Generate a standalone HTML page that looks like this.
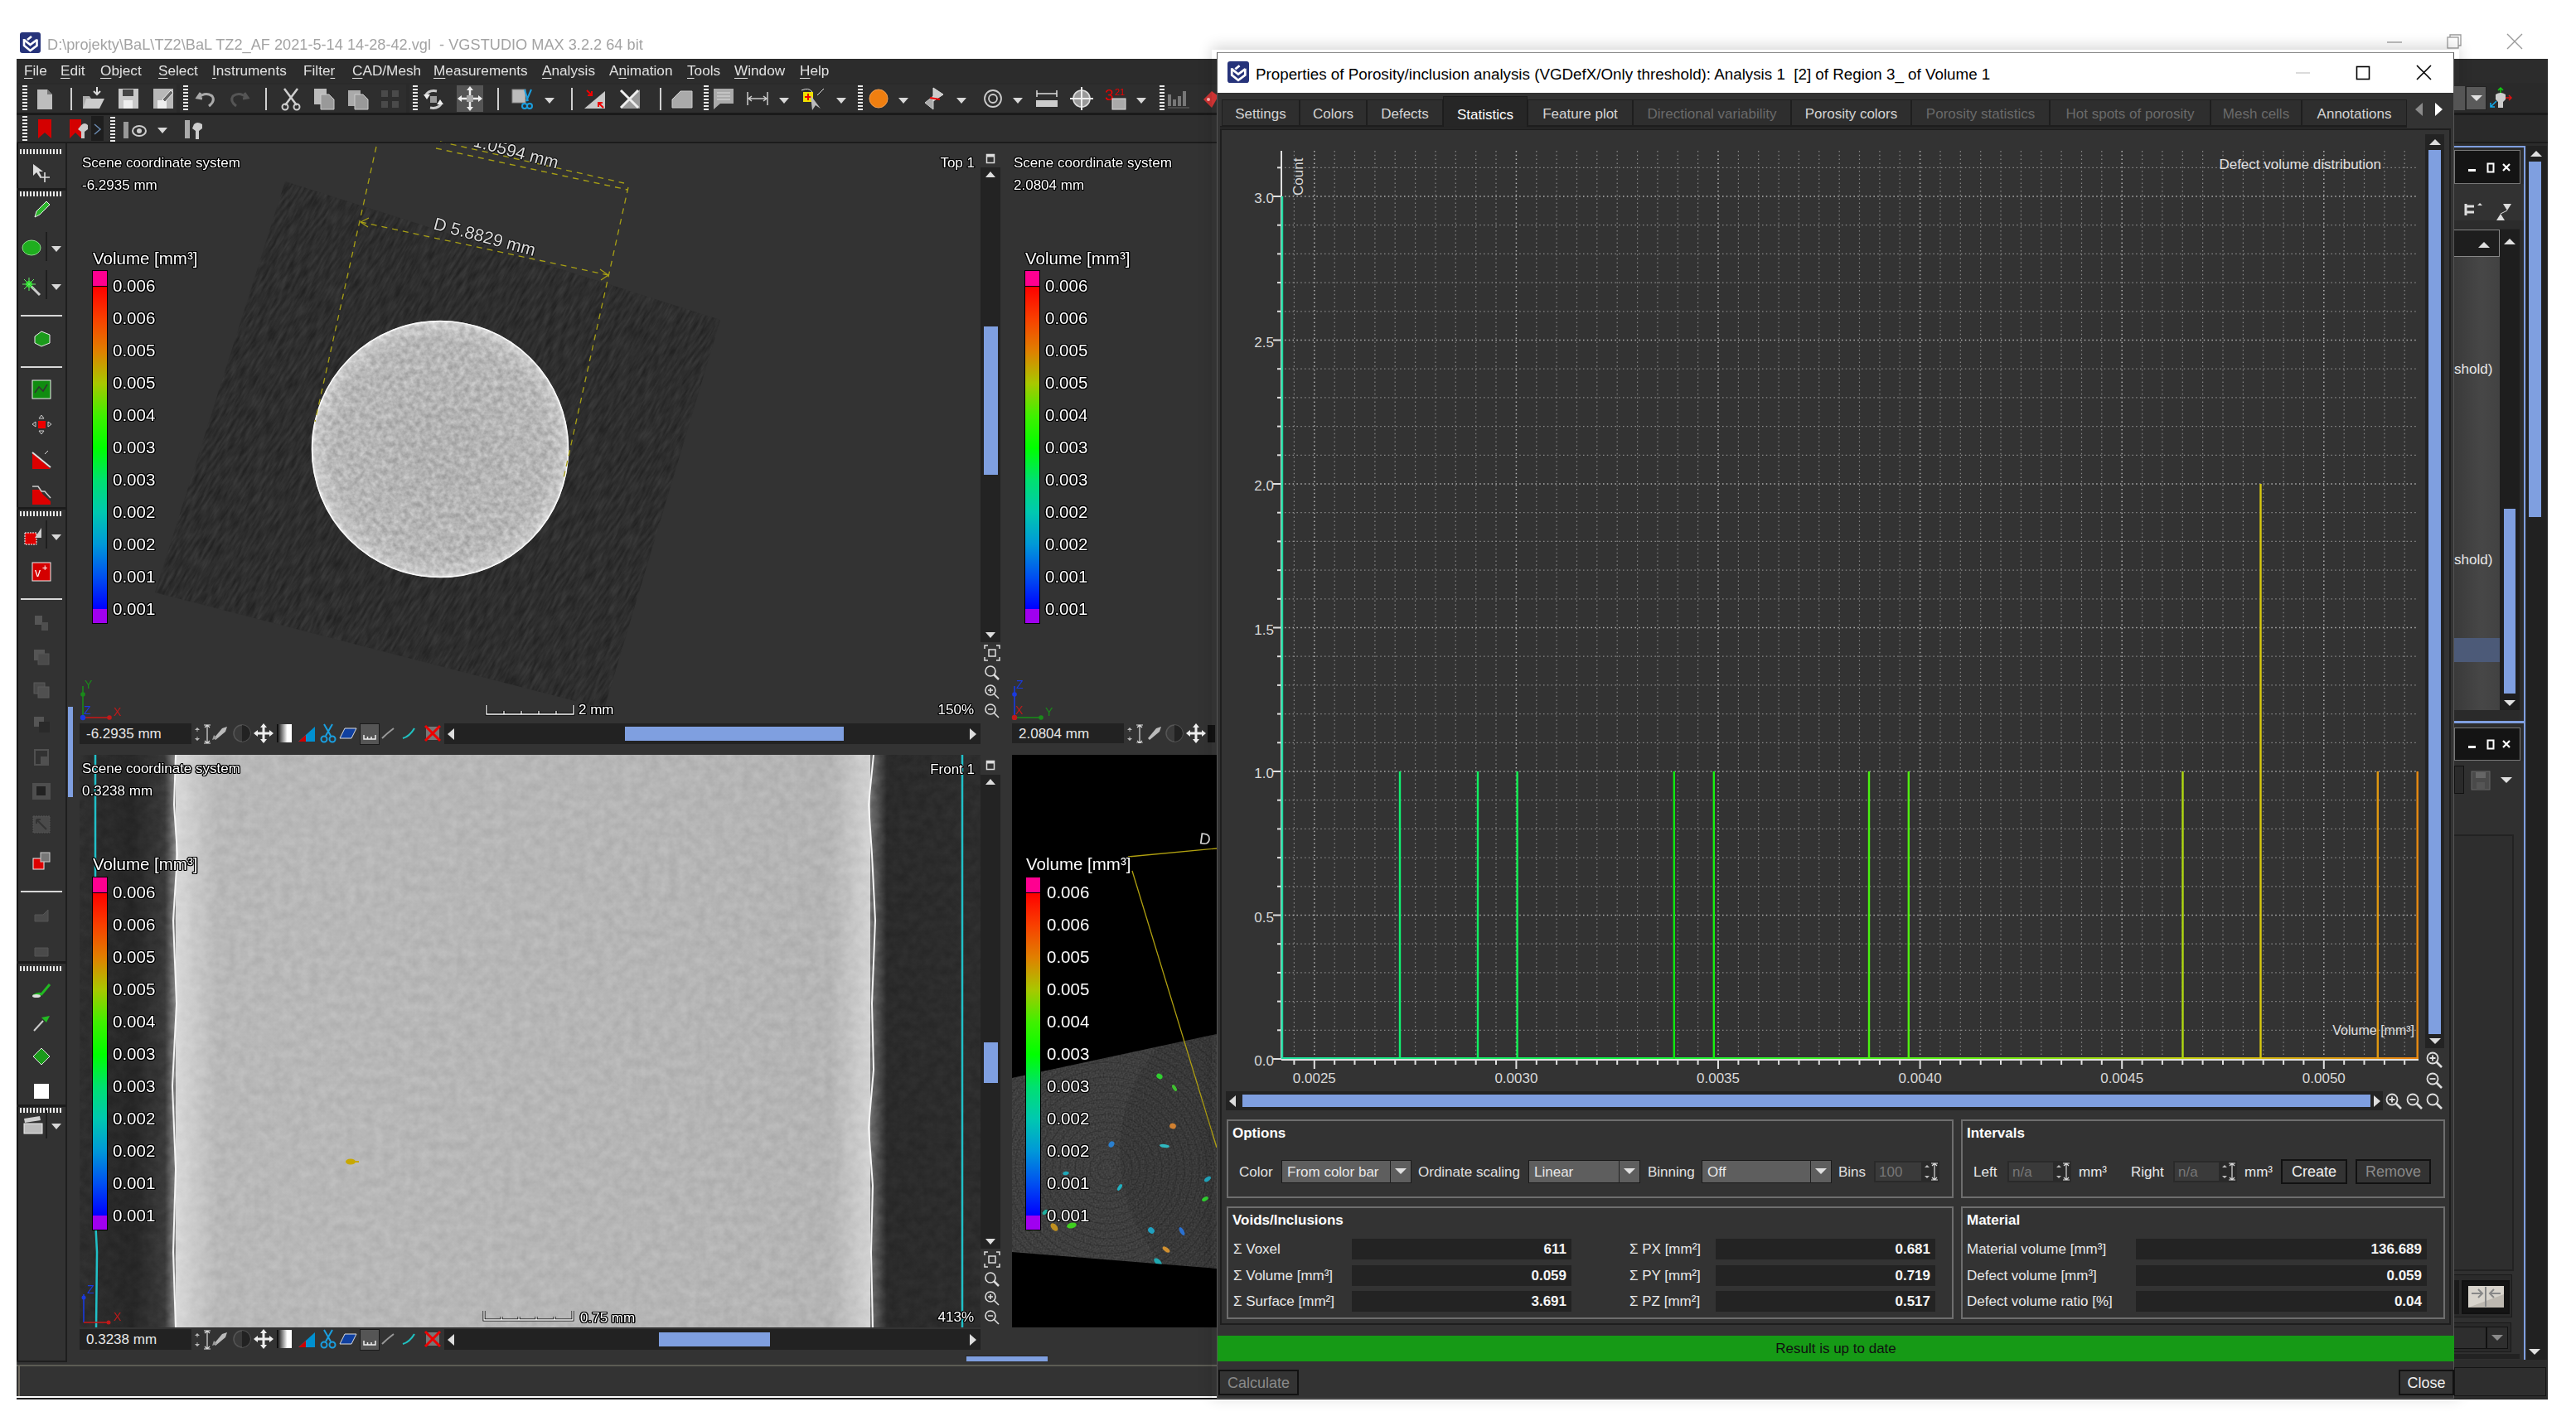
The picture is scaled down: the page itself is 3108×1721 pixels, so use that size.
<!DOCTYPE html><html><head><meta charset="utf-8"><style>html,body{margin:0;padding:0;}body{width:3108px;height:1721px;position:relative;overflow:hidden;background:#ffffff;font-family:"Liberation Sans", sans-serif;}svg{overflow:visible;}</style></head><body><svg style="position:absolute;left:24px;top:39px;" width="25" height="25" viewBox="0 0 25 25"><rect x="0" y="0" width="25" height="25" rx="3.0" fill="#26337a"/><g stroke="#fff" stroke-width="2.6" fill="none" stroke-linejoin="miter"><path d="M5.0 8.0 V16.0 L12.5 22.0 L20.5 16.0 V8.5"/><path d="M5.0 9.0 L12.5 15.0 L20.5 9.0"/><path d="M9.0 9.0 L14.0 5.0"/></g></svg>
<div style="position:absolute;left:57px;top:44.2px;line-height:21px;font-size:18.2px;color:#a3a3a3;white-space:nowrap;">D:\projekty\BaL\TZ2\BaL TZ2_AF 2021-5-14 14-28-42.vgl&nbsp; - VGSTUDIO MAX 3.2.2 64 bit</div>
<svg style="position:absolute;left:2878px;top:40px;" width="110" height="24" viewBox="0 0 110 24"><line x1="2" y1="11" x2="20" y2="11" stroke="#9a9a9a" stroke-width="1.3"/><rect x="75" y="5" width="13" height="13" fill="none" stroke="#9a9a9a" stroke-width="1.3"/><path d="M78 5 V2 H91 V15 H88" fill="none" stroke="#9a9a9a" stroke-width="1.3"/></svg>
<svg style="position:absolute;left:3022px;top:38px;" width="24" height="24" viewBox="0 0 24 24"><path d="M3 3 L21 21 M21 3 L3 21" stroke="#9a9a9a" stroke-width="1.4"/></svg>
<div style="position:absolute;left:20px;top:71px;width:3054px;height:1617px;background:#333333;"></div>
<div style="position:absolute;left:20px;top:71px;width:3054px;height:29px;background:#2c2c2c;"></div>
<div style="position:absolute;left:29px;top:75.0px;line-height:20px;font-size:17.2px;color:#e2e2e2;white-space:nowrap;text-decoration-thickness:1px;text-underline-offset:3px;"><u>F</u>ile</div>
<div style="position:absolute;left:73px;top:75.0px;line-height:20px;font-size:17.2px;color:#e2e2e2;white-space:nowrap;text-decoration-thickness:1px;text-underline-offset:3px;"><u>E</u>dit</div>
<div style="position:absolute;left:121px;top:75.0px;line-height:20px;font-size:17.2px;color:#e2e2e2;white-space:nowrap;text-decoration-thickness:1px;text-underline-offset:3px;"><u>O</u>bject</div>
<div style="position:absolute;left:191px;top:75.0px;line-height:20px;font-size:17.2px;color:#e2e2e2;white-space:nowrap;text-decoration-thickness:1px;text-underline-offset:3px;"><u>S</u>elect</div>
<div style="position:absolute;left:256px;top:75.0px;line-height:20px;font-size:17.2px;color:#e2e2e2;white-space:nowrap;text-decoration-thickness:1px;text-underline-offset:3px;"><u>I</u>nstruments</div>
<div style="position:absolute;left:366px;top:75.0px;line-height:20px;font-size:17.2px;color:#e2e2e2;white-space:nowrap;text-decoration-thickness:1px;text-underline-offset:3px;">Filte<u>r</u></div>
<div style="position:absolute;left:425px;top:75.0px;line-height:20px;font-size:17.2px;color:#e2e2e2;white-space:nowrap;text-decoration-thickness:1px;text-underline-offset:3px;"><u>C</u>AD/Mesh</div>
<div style="position:absolute;left:523px;top:75.0px;line-height:20px;font-size:17.2px;color:#e2e2e2;white-space:nowrap;text-decoration-thickness:1px;text-underline-offset:3px;"><u>M</u>easurements</div>
<div style="position:absolute;left:654px;top:75.0px;line-height:20px;font-size:17.2px;color:#e2e2e2;white-space:nowrap;text-decoration-thickness:1px;text-underline-offset:3px;"><u>A</u>nalysis</div>
<div style="position:absolute;left:735px;top:75.0px;line-height:20px;font-size:17.2px;color:#e2e2e2;white-space:nowrap;text-decoration-thickness:1px;text-underline-offset:3px;">A<u>n</u>imation</div>
<div style="position:absolute;left:829px;top:75.0px;line-height:20px;font-size:17.2px;color:#e2e2e2;white-space:nowrap;text-decoration-thickness:1px;text-underline-offset:3px;"><u>T</u>ools</div>
<div style="position:absolute;left:886px;top:75.0px;line-height:20px;font-size:17.2px;color:#e2e2e2;white-space:nowrap;text-decoration-thickness:1px;text-underline-offset:3px;"><u>W</u>indow</div>
<div style="position:absolute;left:965px;top:75.0px;line-height:20px;font-size:17.2px;color:#e2e2e2;white-space:nowrap;text-decoration-thickness:1px;text-underline-offset:3px;"><u>H</u>elp</div>
<div style="position:absolute;left:20px;top:100px;width:3054px;height:73px;background:#2a2a2a;"></div>
<div style="position:absolute;left:20px;top:137px;width:3054px;height:34px;background:#2f2f2f;"></div>
<div style="position:absolute;left:20px;top:136px;width:3054px;height:3px;background:#1a1a1a;"></div>
<div style="position:absolute;left:20px;top:171px;width:3054px;height:2px;background:#1c1c1c;"></div>
<div style="position:absolute;left:22px;top:102px;width:191px;height:34px;background:#2e2e2e;"></div>
<div style="position:absolute;left:217px;top:102px;width:273px;height:34px;background:#2e2e2e;"></div>
<div style="position:absolute;left:494px;top:102px;width:2580px;height:34px;background:#2e2e2e;"></div>
<svg style="position:absolute;left:27px;top:103px;" width="6" height="32" viewBox="0 0 6 32"><rect x="0" y="0" width="6" height="2" fill="#e8e8e8"/><rect x="0" y="4" width="6" height="2" fill="#e8e8e8"/><rect x="0" y="8" width="6" height="2" fill="#e8e8e8"/><rect x="0" y="12" width="6" height="2" fill="#e8e8e8"/><rect x="0" y="16" width="6" height="2" fill="#e8e8e8"/><rect x="0" y="20" width="6" height="2" fill="#e8e8e8"/><rect x="0" y="24" width="6" height="2" fill="#e8e8e8"/><rect x="0" y="28" width="6" height="2" fill="#e8e8e8"/></svg>
<svg style="position:absolute;left:221px;top:103px;" width="6" height="32" viewBox="0 0 6 32"><rect x="0" y="0" width="6" height="2" fill="#e8e8e8"/><rect x="0" y="4" width="6" height="2" fill="#e8e8e8"/><rect x="0" y="8" width="6" height="2" fill="#e8e8e8"/><rect x="0" y="12" width="6" height="2" fill="#e8e8e8"/><rect x="0" y="16" width="6" height="2" fill="#e8e8e8"/><rect x="0" y="20" width="6" height="2" fill="#e8e8e8"/><rect x="0" y="24" width="6" height="2" fill="#e8e8e8"/><rect x="0" y="28" width="6" height="2" fill="#e8e8e8"/></svg>
<svg style="position:absolute;left:498px;top:103px;" width="6" height="32" viewBox="0 0 6 32"><rect x="0" y="0" width="6" height="2" fill="#e8e8e8"/><rect x="0" y="4" width="6" height="2" fill="#e8e8e8"/><rect x="0" y="8" width="6" height="2" fill="#e8e8e8"/><rect x="0" y="12" width="6" height="2" fill="#e8e8e8"/><rect x="0" y="16" width="6" height="2" fill="#e8e8e8"/><rect x="0" y="20" width="6" height="2" fill="#e8e8e8"/><rect x="0" y="24" width="6" height="2" fill="#e8e8e8"/><rect x="0" y="28" width="6" height="2" fill="#e8e8e8"/></svg>
<svg style="position:absolute;left:43px;top:107px;" width="22" height="26" viewBox="0 0 22 26"><path d="M2 1 H14 L20 7 V25 H2 Z" fill="#bdbdbd"/><path d="M14 1 V7 H20" fill="#777"/></svg>
<div style="position:absolute;left:85px;top:106px;width:2px;height:27px;background:#d0d0d0;"></div>
<svg style="position:absolute;left:98px;top:104px;" width="30" height="30" viewBox="0 0 30 30"><path d="M2 12 H10 L12 15 H24 L20 27 H2 Z" fill="#aaa"/><path d="M6 15 H28 L22 27 H2 Z" fill="#ccc"/><path d="M19 1 V9 M15 6 L19 10 L23 6" stroke="#ddd" stroke-width="2" fill="none"/></svg>
<svg style="position:absolute;left:142px;top:106px;" width="26" height="26" viewBox="0 0 26 26"><rect x="1" y="1" width="24" height="24" fill="#c8c8c8"/><rect x="6" y="2" width="13" height="8" fill="#444"/><rect x="7" y="15" width="11" height="10" fill="#eee"/></svg>
<svg style="position:absolute;left:184px;top:106px;" width="26" height="26" viewBox="0 0 26 26"><rect x="1" y="1" width="24" height="24" fill="#b8b8b8"/><rect x="6" y="15" width="11" height="10" fill="#eee"/><path d="M12 14 L22 3 L25 6 L15 17 Z" fill="#666" stroke="#eee"/></svg>
<svg style="position:absolute;left:236px;top:108px;" width="26" height="22" viewBox="0 0 26 22"><path d="M6 4 L2 10 L8 11 M3 10 Q12 2 20 8 Q24 14 16 20" stroke="#aaa" stroke-width="3" fill="none"/></svg>
<svg style="position:absolute;left:275px;top:108px;" width="26" height="22" viewBox="0 0 26 22"><path d="M20 4 L24 10 L18 11 M23 10 Q14 2 6 8 Q2 14 10 20" stroke="#555" stroke-width="3" fill="none"/></svg>
<div style="position:absolute;left:320px;top:106px;width:2px;height:27px;background:#d0d0d0;"></div>
<svg style="position:absolute;left:338px;top:105px;" width="26" height="28" viewBox="0 0 26 28"><path d="M5 2 L20 22 M21 2 L6 22" stroke="#cfcfcf" stroke-width="2.5"/><circle cx="6" cy="24" r="3.5" fill="none" stroke="#cfcfcf" stroke-width="2"/><circle cx="20" cy="24" r="3.5" fill="none" stroke="#cfcfcf" stroke-width="2"/></svg>
<svg style="position:absolute;left:378px;top:106px;" width="28" height="28" viewBox="0 0 28 28"><rect x="1" y="1" width="15" height="19" fill="#bbb"/><path d="M9 8 H19 L25 14 V26 H9 Z" fill="#999" stroke="#ccc"/></svg>
<svg style="position:absolute;left:419px;top:106px;" width="28" height="28" viewBox="0 0 28 28"><rect x="1" y="3" width="15" height="19" fill="#aaa"/><path d="M9 8 H19 L25 14 V26 H9 Z" fill="#999" stroke="#ccc"/></svg>
<svg style="position:absolute;left:459px;top:108px;" width="24" height="24" viewBox="0 0 24 24"><rect x="1" y="1" width="8" height="8" fill="#4a4a4a"/><rect x="14" y="1" width="8" height="8" fill="#4a4a4a"/><rect x="1" y="14" width="8" height="8" fill="#4a4a4a"/><rect x="14" y="14" width="8" height="8" fill="#4a4a4a"/></svg>
<svg style="position:absolute;left:509px;top:106px;" width="28" height="28" viewBox="0 0 28 28"><path d="M4 10 Q8 2 18 4 M24 18 Q20 26 10 24" stroke="#ccc" stroke-width="3" fill="none"/><path d="M2 8 L10 8 L6 14 Z M26 20 L18 20 L22 14Z" fill="#eee"/><rect x="10" y="10" width="8" height="8" fill="#999"/></svg>
<div style="position:absolute;left:551px;top:103px;width:32px;height:32px;background:#555;"></div>
<svg style="position:absolute;left:551px;top:103px;" width="32" height="32" viewBox="0 0 32 32"><path d="M16 3 V29 M3 16 H29" stroke="#eee" stroke-width="2.5"/><path d="M16 1 L12 6 H20Z M16 31 L12 26 H20Z M1 16 L6 12 V20Z M31 16 L26 12 V20Z" fill="#eee"/><rect x="12" y="12" width="8" height="8" fill="#aaa"/></svg>
<div style="position:absolute;left:600px;top:106px;width:2px;height:27px;background:#d0d0d0;"></div>
<svg style="position:absolute;left:617px;top:106px;" width="30" height="28" viewBox="0 0 30 28"><rect x="1" y="2" width="16" height="16" fill="#bbb" stroke="#888"/><path d="M16 2 L20 16 M24 2 L18 16" stroke="#1a9fe0" stroke-width="2"/><circle cx="16" cy="22" r="3" fill="none" stroke="#1a9fe0" stroke-width="2"/><circle cx="22" cy="22" r="3" fill="none" stroke="#1a9fe0" stroke-width="2"/></svg>
<svg style="position:absolute;left:657px;top:118px;" width="12" height="8" viewBox="0 0 12 8"><path d="M0 0 H12 L6 7 Z" fill="#d8d8d8"/></svg>
<div style="position:absolute;left:689px;top:106px;width:2px;height:27px;background:#d0d0d0;"></div>
<svg style="position:absolute;left:704px;top:106px;" width="28" height="26" viewBox="0 0 28 26"><path d="M1 25 L26 4 V25 Z" fill="#c8c8c8"/><path d="M4 3 L10 9 M10 4 V9 H5 M24 24 L18 18 M18 23 V18 H23" stroke="#e00" stroke-width="2" fill="none"/></svg>
<svg style="position:absolute;left:746px;top:106px;" width="28" height="26" viewBox="0 0 28 26"><path d="M3 25 L26 2 V25 Z" fill="#999"/><path d="M3 3 L24 24 M24 3 L3 24" stroke="#eee" stroke-width="3"/></svg>
<div style="position:absolute;left:796px;top:106px;width:2px;height:27px;background:#d0d0d0;"></div>
<svg style="position:absolute;left:809px;top:106px;" width="28" height="26" viewBox="0 0 28 26"><path d="M2 14 L12 4 H26 V24 H2 Z" fill="#aaa" stroke="#ccc"/></svg>
<svg style="position:absolute;left:849px;top:103px;" width="6" height="32" viewBox="0 0 6 32"><rect x="0" y="0" width="6" height="2" fill="#e8e8e8"/><rect x="0" y="4" width="6" height="2" fill="#e8e8e8"/><rect x="0" y="8" width="6" height="2" fill="#e8e8e8"/><rect x="0" y="12" width="6" height="2" fill="#e8e8e8"/><rect x="0" y="16" width="6" height="2" fill="#e8e8e8"/><rect x="0" y="20" width="6" height="2" fill="#e8e8e8"/><rect x="0" y="24" width="6" height="2" fill="#e8e8e8"/><rect x="0" y="28" width="6" height="2" fill="#e8e8e8"/></svg>
<svg style="position:absolute;left:859px;top:106px;" width="28" height="26" viewBox="0 0 28 26"><path d="M2 1 H26 V19 H10 L2 26 Z" fill="#aaa"/><path d="M6 6 H22 M6 10 H22 M6 14 H22" stroke="#ddd"/></svg>
<svg style="position:absolute;left:900px;top:109px;" width="28" height="20" viewBox="0 0 28 20"><path d="M2 2 V18 M26 2 V18 M3 10 H25 M3 10 L7 7 M3 10 L7 13 M25 10 L21 7 M25 10 L21 13" stroke="#ccc" stroke-width="1.5" fill="none"/></svg>
<svg style="position:absolute;left:940px;top:118px;" width="12" height="8" viewBox="0 0 12 8"><path d="M0 0 H12 L6 7 Z" fill="#d8d8d8"/></svg>
<svg style="position:absolute;left:966px;top:105px;" width="30" height="30" viewBox="0 0 30 30"><rect x="3" y="6" width="12" height="12" fill="#f0e000"/><path d="M9 8 V16 M5 12 H13" stroke="#e00" stroke-width="2"/><path d="M12 10 L24 26 L18 22 L14 28 Z" fill="#bbb"/><path d="M1 4 Q10 0 14 6 M20 10 Q26 4 28 2" stroke="#ddd" fill="none"/></svg>
<svg style="position:absolute;left:1009px;top:118px;" width="12" height="8" viewBox="0 0 12 8"><path d="M0 0 H12 L6 7 Z" fill="#d8d8d8"/></svg>
<svg style="position:absolute;left:1035px;top:103px;" width="6" height="32" viewBox="0 0 6 32"><rect x="0" y="0" width="6" height="2" fill="#e8e8e8"/><rect x="0" y="4" width="6" height="2" fill="#e8e8e8"/><rect x="0" y="8" width="6" height="2" fill="#e8e8e8"/><rect x="0" y="12" width="6" height="2" fill="#e8e8e8"/><rect x="0" y="16" width="6" height="2" fill="#e8e8e8"/><rect x="0" y="20" width="6" height="2" fill="#e8e8e8"/><rect x="0" y="24" width="6" height="2" fill="#e8e8e8"/><rect x="0" y="28" width="6" height="2" fill="#e8e8e8"/></svg>
<svg style="position:absolute;left:1045px;top:104px;" width="30" height="30" viewBox="0 0 30 30"><circle cx="15" cy="15" r="11" fill="#f07f10" stroke="#f5a050"/></svg>
<svg style="position:absolute;left:1084px;top:118px;" width="12" height="8" viewBox="0 0 12 8"><path d="M0 0 H12 L6 7 Z" fill="#d8d8d8"/></svg>
<svg style="position:absolute;left:1112px;top:104px;" width="30" height="30" viewBox="0 0 30 30"><path d="M4 20 L14 12 V28 Z" fill="#aaa" stroke="#ccc"/><path d="M14 2 L26 10 L14 18 Z" fill="#ccc" stroke="#ddd"/><path d="M10 14 L22 16" stroke="#e00" stroke-width="2"/></svg>
<svg style="position:absolute;left:1154px;top:118px;" width="12" height="8" viewBox="0 0 12 8"><path d="M0 0 H12 L6 7 Z" fill="#d8d8d8"/></svg>
<svg style="position:absolute;left:1184px;top:105px;" width="28" height="28" viewBox="0 0 28 28"><circle cx="14" cy="14" r="10" fill="none" stroke="#ccc" stroke-width="1.8"/><circle cx="14" cy="14" r="5" fill="none" stroke="#ccc" stroke-width="1.8"/></svg>
<svg style="position:absolute;left:1222px;top:118px;" width="12" height="8" viewBox="0 0 12 8"><path d="M0 0 H12 L6 7 Z" fill="#d8d8d8"/></svg>
<svg style="position:absolute;left:1249px;top:107px;" width="28" height="24" viewBox="0 0 28 24"><path d="M2 2 V10 M26 2 V10 M2 6 H26" stroke="#ddd" stroke-width="1.5"/><rect x="1" y="14" width="26" height="8" fill="#ccc"/></svg>
<svg style="position:absolute;left:1290px;top:104px;" width="30" height="30" viewBox="0 0 30 30"><circle cx="15" cy="15" r="10" fill="#999" stroke="#ddd" stroke-width="1.6"/><path d="M15 1 V29 M1 15 H29" stroke="#eee" stroke-width="2"/></svg>
<svg style="position:absolute;left:1333px;top:104px;" width="30" height="30" viewBox="0 0 30 30"><text x="0" y="17" font-size="19" fill="#e00" font-family="Liberation Sans">3</text><text x="12" y="11" font-size="11" fill="#e00" font-family="Liberation Sans">21</text><rect x="9" y="15" width="16" height="13" fill="#aaa" stroke="#ddd"/></svg>
<svg style="position:absolute;left:1371px;top:118px;" width="12" height="8" viewBox="0 0 12 8"><path d="M0 0 H12 L6 7 Z" fill="#d8d8d8"/></svg>
<svg style="position:absolute;left:1399px;top:103px;" width="6" height="32" viewBox="0 0 6 32"><rect x="0" y="0" width="6" height="2" fill="#e8e8e8"/><rect x="0" y="4" width="6" height="2" fill="#e8e8e8"/><rect x="0" y="8" width="6" height="2" fill="#e8e8e8"/><rect x="0" y="12" width="6" height="2" fill="#e8e8e8"/><rect x="0" y="16" width="6" height="2" fill="#e8e8e8"/><rect x="0" y="20" width="6" height="2" fill="#e8e8e8"/><rect x="0" y="24" width="6" height="2" fill="#e8e8e8"/><rect x="0" y="28" width="6" height="2" fill="#e8e8e8"/></svg>
<svg style="position:absolute;left:1408px;top:106px;" width="28" height="26" viewBox="0 0 28 26"><path d="M3 8 V22 M9 14 V22 M15 10 V22 M21 4 V22" stroke="#777" stroke-width="4"/><path d="M1 24 H27" stroke="#666"/></svg>
<svg style="position:absolute;left:1450px;top:106px;" width="20" height="26" viewBox="0 0 20 26"><path d="M2 14 L12 4 L20 10 L12 24 Z" fill="#c33"/><circle cx="8" cy="14" r="2" fill="#fbb"/></svg>
<svg style="position:absolute;left:27px;top:140px;" width="6" height="30" viewBox="0 0 6 30"><rect x="0" y="0" width="6" height="2" fill="#e8e8e8"/><rect x="0" y="4" width="6" height="2" fill="#e8e8e8"/><rect x="0" y="8" width="6" height="2" fill="#e8e8e8"/><rect x="0" y="12" width="6" height="2" fill="#e8e8e8"/><rect x="0" y="16" width="6" height="2" fill="#e8e8e8"/><rect x="0" y="20" width="6" height="2" fill="#e8e8e8"/><rect x="0" y="24" width="6" height="2" fill="#e8e8e8"/><rect x="0" y="28" width="6" height="2" fill="#e8e8e8"/></svg>
<svg style="position:absolute;left:44px;top:143px;" width="20" height="26" viewBox="0 0 20 26"><path d="M2 1 H18 V24 L10 17 L2 24 Z" fill="#d40000"/></svg>
<svg style="position:absolute;left:82px;top:143px;" width="30" height="26" viewBox="0 0 30 26"><path d="M2 1 H16 V24 L9 17 L2 24 Z" fill="#d40000"/><path d="M16 8 Q20 4 24 8 V13 L20 16 V24 H16 V16 L12 13 Z" fill="#ccc"/></svg>
<div style="position:absolute;left:110px;top:140px;width:15px;height:30px;background:#1e1e1e;"></div>
<svg style="position:absolute;left:112px;top:148px;" width="12" height="16" viewBox="0 0 12 16"><path d="M2 2 L9 8 L2 14" stroke="#6a8ab0" stroke-width="1.5" fill="none"/></svg>
<svg style="position:absolute;left:133px;top:141px;" width="6" height="30" viewBox="0 0 6 30"><rect x="0" y="0" width="6" height="2" fill="#e8e8e8"/><rect x="0" y="4" width="6" height="2" fill="#e8e8e8"/><rect x="0" y="8" width="6" height="2" fill="#e8e8e8"/><rect x="0" y="12" width="6" height="2" fill="#e8e8e8"/><rect x="0" y="16" width="6" height="2" fill="#e8e8e8"/><rect x="0" y="20" width="6" height="2" fill="#e8e8e8"/><rect x="0" y="24" width="6" height="2" fill="#e8e8e8"/><rect x="0" y="28" width="6" height="2" fill="#e8e8e8"/></svg>
<svg style="position:absolute;left:148px;top:146px;" width="40" height="22" viewBox="0 0 40 22"><rect x="1" y="1" width="6" height="20" fill="#999"/><ellipse cx="20" cy="12" rx="8" ry="6" fill="none" stroke="#ccc" stroke-width="2"/><circle cx="20" cy="12" r="3" fill="#ccc"/></svg>
<svg style="position:absolute;left:190px;top:154px;" width="12" height="8" viewBox="0 0 12 8"><path d="M0 0 H12 L6 7 Z" fill="#d8d8d8"/></svg>
<svg style="position:absolute;left:222px;top:144px;" width="30" height="26" viewBox="0 0 30 26"><rect x="1" y="1" width="6" height="22" fill="#aaa"/><path d="M12 6 Q16 2 22 6 V11 L18 14 V24 H14 V14 L10 11 Z" fill="#ccc"/></svg>
<div style="position:absolute;left:20px;top:173px;width:60px;height:1471px;background:#323232;"></div>
<div style="position:absolute;left:20px;top:173px;width:2px;height:1471px;background:#111;"></div>
<div style="position:absolute;left:79px;top:173px;width:2px;height:1471px;background:#1e1e1e;"></div>
<div style="position:absolute;left:20px;top:1642px;width:60px;height:2px;background:#1e1e1e;"></div>
<svg style="position:absolute;left:24px;top:180px;" width="52" height="6" viewBox="0 0 52 6"><rect x="0" y="0" width="2" height="6" fill="#e8e8e8"/><rect x="4" y="0" width="2" height="6" fill="#e8e8e8"/><rect x="8" y="0" width="2" height="6" fill="#e8e8e8"/><rect x="12" y="0" width="2" height="6" fill="#e8e8e8"/><rect x="16" y="0" width="2" height="6" fill="#e8e8e8"/><rect x="20" y="0" width="2" height="6" fill="#e8e8e8"/><rect x="24" y="0" width="2" height="6" fill="#e8e8e8"/><rect x="28" y="0" width="2" height="6" fill="#e8e8e8"/><rect x="32" y="0" width="2" height="6" fill="#e8e8e8"/><rect x="36" y="0" width="2" height="6" fill="#e8e8e8"/><rect x="40" y="0" width="2" height="6" fill="#e8e8e8"/><rect x="44" y="0" width="2" height="6" fill="#e8e8e8"/><rect x="48" y="0" width="2" height="6" fill="#e8e8e8"/></svg>
<svg style="position:absolute;left:24px;top:231px;" width="52" height="6" viewBox="0 0 52 6"><rect x="0" y="0" width="2" height="6" fill="#e8e8e8"/><rect x="4" y="0" width="2" height="6" fill="#e8e8e8"/><rect x="8" y="0" width="2" height="6" fill="#e8e8e8"/><rect x="12" y="0" width="2" height="6" fill="#e8e8e8"/><rect x="16" y="0" width="2" height="6" fill="#e8e8e8"/><rect x="20" y="0" width="2" height="6" fill="#e8e8e8"/><rect x="24" y="0" width="2" height="6" fill="#e8e8e8"/><rect x="28" y="0" width="2" height="6" fill="#e8e8e8"/><rect x="32" y="0" width="2" height="6" fill="#e8e8e8"/><rect x="36" y="0" width="2" height="6" fill="#e8e8e8"/><rect x="40" y="0" width="2" height="6" fill="#e8e8e8"/><rect x="44" y="0" width="2" height="6" fill="#e8e8e8"/><rect x="48" y="0" width="2" height="6" fill="#e8e8e8"/></svg>
<svg style="position:absolute;left:24px;top:617px;" width="52" height="6" viewBox="0 0 52 6"><rect x="0" y="0" width="2" height="6" fill="#e8e8e8"/><rect x="4" y="0" width="2" height="6" fill="#e8e8e8"/><rect x="8" y="0" width="2" height="6" fill="#e8e8e8"/><rect x="12" y="0" width="2" height="6" fill="#e8e8e8"/><rect x="16" y="0" width="2" height="6" fill="#e8e8e8"/><rect x="20" y="0" width="2" height="6" fill="#e8e8e8"/><rect x="24" y="0" width="2" height="6" fill="#e8e8e8"/><rect x="28" y="0" width="2" height="6" fill="#e8e8e8"/><rect x="32" y="0" width="2" height="6" fill="#e8e8e8"/><rect x="36" y="0" width="2" height="6" fill="#e8e8e8"/><rect x="40" y="0" width="2" height="6" fill="#e8e8e8"/><rect x="44" y="0" width="2" height="6" fill="#e8e8e8"/><rect x="48" y="0" width="2" height="6" fill="#e8e8e8"/></svg>
<svg style="position:absolute;left:24px;top:1166px;" width="52" height="6" viewBox="0 0 52 6"><rect x="0" y="0" width="2" height="6" fill="#e8e8e8"/><rect x="4" y="0" width="2" height="6" fill="#e8e8e8"/><rect x="8" y="0" width="2" height="6" fill="#e8e8e8"/><rect x="12" y="0" width="2" height="6" fill="#e8e8e8"/><rect x="16" y="0" width="2" height="6" fill="#e8e8e8"/><rect x="20" y="0" width="2" height="6" fill="#e8e8e8"/><rect x="24" y="0" width="2" height="6" fill="#e8e8e8"/><rect x="28" y="0" width="2" height="6" fill="#e8e8e8"/><rect x="32" y="0" width="2" height="6" fill="#e8e8e8"/><rect x="36" y="0" width="2" height="6" fill="#e8e8e8"/><rect x="40" y="0" width="2" height="6" fill="#e8e8e8"/><rect x="44" y="0" width="2" height="6" fill="#e8e8e8"/><rect x="48" y="0" width="2" height="6" fill="#e8e8e8"/></svg>
<svg style="position:absolute;left:24px;top:1337px;" width="52" height="6" viewBox="0 0 52 6"><rect x="0" y="0" width="2" height="6" fill="#e8e8e8"/><rect x="4" y="0" width="2" height="6" fill="#e8e8e8"/><rect x="8" y="0" width="2" height="6" fill="#e8e8e8"/><rect x="12" y="0" width="2" height="6" fill="#e8e8e8"/><rect x="16" y="0" width="2" height="6" fill="#e8e8e8"/><rect x="20" y="0" width="2" height="6" fill="#e8e8e8"/><rect x="24" y="0" width="2" height="6" fill="#e8e8e8"/><rect x="28" y="0" width="2" height="6" fill="#e8e8e8"/><rect x="32" y="0" width="2" height="6" fill="#e8e8e8"/><rect x="36" y="0" width="2" height="6" fill="#e8e8e8"/><rect x="40" y="0" width="2" height="6" fill="#e8e8e8"/><rect x="44" y="0" width="2" height="6" fill="#e8e8e8"/><rect x="48" y="0" width="2" height="6" fill="#e8e8e8"/></svg>
<div style="position:absolute;left:25px;top:380px;width:50px;height:2px;background:#d8d8d8;"></div>
<div style="position:absolute;left:25px;top:442px;width:50px;height:2px;background:#d8d8d8;"></div>
<div style="position:absolute;left:20px;top:227px;width:60px;height:3px;background:#1c1c1c;"></div>
<div style="position:absolute;left:20px;top:612px;width:60px;height:3px;background:#1c1c1c;"></div>
<div style="position:absolute;left:20px;top:1160px;width:60px;height:3px;background:#1c1c1c;"></div>
<div style="position:absolute;left:20px;top:1333px;width:60px;height:3px;background:#1c1c1c;"></div>
<svg style="position:absolute;left:38px;top:196px;" width="24" height="24" viewBox="0 0 24 24"><path d="M2 2 L2 16 L6 12 L10 18 L12 17 L9 11 L14 11 Z" fill="#ddd"/><path d="M16 12 V24 M10 18 H22" stroke="#ddd" stroke-width="1.6"/></svg>
<svg style="position:absolute;left:38px;top:240px;" width="24" height="24" viewBox="0 0 24 24"><path d="M4 22 L6 15 L18 3 L22 7 L10 19 Z" fill="#2db52d" stroke="#eee" stroke-width="1"/></svg>
<svg style="position:absolute;left:26px;top:287px;" width="24" height="24" viewBox="0 0 24 24"><ellipse cx="12" cy="12" rx="11" ry="9" fill="#1fae1f" stroke="#8d8" /></svg>
<svg style="position:absolute;left:62px;top:297px;" width="12" height="8" viewBox="0 0 12 8"><path d="M0 0 H12 L6 7 Z" fill="#d8d8d8"/></svg>
<div style="position:absolute;left:55px;top:280px;width:2px;height:35px;background:#1e1e1e;"></div>
<svg style="position:absolute;left:26px;top:334px;" width="24" height="24" viewBox="0 0 24 24"><path d="M10 10 L22 22" stroke="#ccc" stroke-width="3"/><circle cx="9" cy="9" r="4" fill="#1c1"/><path d="M9 1 V17 M1 9 H17 M3 3 L15 15 M15 3 L3 15" stroke="#6e6" stroke-width="1"/></svg>
<svg style="position:absolute;left:62px;top:343px;" width="12" height="8" viewBox="0 0 12 8"><path d="M0 0 H12 L6 7 Z" fill="#d8d8d8"/></svg>
<div style="position:absolute;left:55px;top:326px;width:2px;height:35px;background:#1e1e1e;"></div>
<svg style="position:absolute;left:38px;top:396px;" width="24" height="24" viewBox="0 0 24 24"><path d="M4 10 L12 4 L22 8 V18 L12 22 L4 18 Z" fill="#1b9a1b" stroke="#eee"/></svg>
<svg style="position:absolute;left:38px;top:458px;" width="24" height="24" viewBox="0 0 24 24"><rect x="1" y="1" width="22" height="22" fill="#108c10" stroke="#eee"/><path d="M4 16 L9 9 L14 14 L19 6" stroke="#333" fill="none" stroke-width="1.5"/></svg>
<svg style="position:absolute;left:38px;top:500px;" width="24" height="24" viewBox="0 0 24 24"><rect x="8" y="8" width="9" height="9" fill="#e00"/><path d="M12 1 L9 5 H15Z M12 24 L9 20 H15Z M1 12 L5 9 V15Z M24 12 L20 9 V15Z" fill="none" stroke="#ccc"/></svg>
<svg style="position:absolute;left:38px;top:542px;" width="24" height="24" viewBox="0 0 24 24"><path d="M1 4 L23 24 H1 Z" fill="#d00"/><path d="M1 4 L23 22" stroke="#ddd" stroke-width="2"/><path d="M20 2 L16 6" stroke="#ddd"/></svg>
<svg style="position:absolute;left:38px;top:585px;" width="24" height="24" viewBox="0 0 24 24"><path d="M1 6 L10 6 L14 12 L23 20 V24 H1 Z" fill="#d00"/><path d="M1 2 H8 L12 8 H16 L23 16" stroke="#ccc" fill="none" stroke-width="1.5"/></svg>
<svg style="position:absolute;left:28px;top:635px;" width="24" height="24" viewBox="0 0 24 24"><rect x="2" y="8" width="14" height="14" fill="#d00" stroke="#fff" stroke-dasharray="2 1"/><path d="M14 14 L22 2 V14 Z" fill="#ccc"/></svg>
<svg style="position:absolute;left:62px;top:645px;" width="12" height="8" viewBox="0 0 12 8"><path d="M0 0 H12 L6 7 Z" fill="#d8d8d8"/></svg>
<div style="position:absolute;left:55px;top:628px;width:2px;height:34px;background:#1e1e1e;"></div>
<svg style="position:absolute;left:38px;top:678px;" width="24" height="24" viewBox="0 0 24 24"><rect x="1" y="1" width="22" height="22" fill="#d40000" stroke="#eee"/><text x="4" y="18" font-size="14" fill="#fff" font-family="Liberation Sans">v</text><text x="13" y="11" font-size="11" fill="#fff" font-family="Liberation Sans">+</text></svg>
<div style="position:absolute;left:25px;top:722px;width:50px;height:2px;background:#d8d8d8;"></div>
<svg style="position:absolute;left:38px;top:740px;" width="24" height="24" viewBox="0 0 24 24"><rect x="4" y="3" width="9" height="11" fill="#555"/><rect x="12" y="11" width="8" height="10" fill="#4e4e4e"/></svg>
<svg style="position:absolute;left:38px;top:781px;" width="24" height="24" viewBox="0 0 24 24"><rect x="3" y="3" width="13" height="13" fill="#555"/><rect x="8" y="8" width="13" height="13" fill="#4a4a4a" stroke="#555"/></svg>
<svg style="position:absolute;left:38px;top:821px;" width="24" height="24" viewBox="0 0 24 24"><rect x="3" y="3" width="13" height="13" fill="#4a4a4a" stroke="#5a5a5a"/><rect x="8" y="8" width="13" height="13" fill="#505050" stroke="#5a5a5a"/></svg>
<svg style="position:absolute;left:38px;top:862px;" width="24" height="24" viewBox="0 0 24 24"><rect x="3" y="3" width="12" height="12" fill="#555"/><rect x="9" y="9" width="13" height="13" fill="#2a2a2a"/></svg>
<svg style="position:absolute;left:38px;top:902px;" width="24" height="24" viewBox="0 0 24 24"><rect x="4" y="3" width="16" height="18" fill="none" stroke="#505050" stroke-width="2"/><rect x="11" y="11" width="8" height="9" fill="#505050"/></svg>
<svg style="position:absolute;left:38px;top:943px;" width="24" height="24" viewBox="0 0 24 24"><rect x="1" y="2" width="22" height="20" fill="#4e4e4e"/><rect x="6" y="6" width="11" height="11" fill="#222"/></svg>
<svg style="position:absolute;left:38px;top:983px;" width="24" height="24" viewBox="0 0 24 24"><rect x="2" y="2" width="20" height="20" fill="#4a4a4a" stroke="#555" stroke-dasharray="2 1"/><path d="M6 6 L18 18 M6 6 H11 M6 6 V11" stroke="#333" stroke-width="2"/></svg>
<svg style="position:absolute;left:38px;top:1027px;" width="24" height="24" viewBox="0 0 24 24"><rect x="2" y="9" width="13" height="13" fill="#d00" stroke="#eee"/><rect x="11" y="2" width="11" height="11" fill="#777" stroke="#ccc"/></svg>
<div style="position:absolute;left:25px;top:1075px;width:50px;height:2px;background:#d8d8d8;"></div>
<svg style="position:absolute;left:38px;top:1090px;" width="24" height="24" viewBox="0 0 24 24"><path d="M4 14 H14 L20 8 V22 H4 Z" fill="#4a4a4a" stroke="#555"/></svg>
<svg style="position:absolute;left:38px;top:1132px;" width="24" height="24" viewBox="0 0 24 24"><path d="M4 12 H20 V22 H4 Z" fill="#4a4a4a" stroke="#555"/></svg>
<svg style="position:absolute;left:38px;top:1182px;" width="24" height="24" viewBox="0 0 24 24"><path d="M2 20 Q8 16 12 18 L22 6" stroke="#2b2" stroke-width="3" fill="none"/><ellipse cx="6" cy="20" rx="5" ry="2" fill="#ddd"/></svg>
<svg style="position:absolute;left:38px;top:1222px;" width="24" height="24" viewBox="0 0 24 24"><path d="M3 22 L14 10" stroke="#ccc" stroke-width="2"/><path d="M12 6 L18 12 L22 4 Z" fill="#2b2"/></svg>
<svg style="position:absolute;left:38px;top:1263px;" width="24" height="24" viewBox="0 0 24 24"><path d="M2 12 L12 2 L22 12 L12 22 Z" fill="#1b9a1b" stroke="#ddd"/></svg>
<svg style="position:absolute;left:38px;top:1305px;" width="24" height="24" viewBox="0 0 24 24"><rect x="3" y="3" width="18" height="18" fill="#fff"/></svg>
<svg style="position:absolute;left:28px;top:1346px;" width="24" height="24" viewBox="0 0 24 24"><rect x="1" y="10" width="22" height="12" fill="#bbb" stroke="#eee"/><path d="M1 4 L20 1 L21 6 L2 9 Z" fill="#ccc"/></svg>
<svg style="position:absolute;left:62px;top:1356px;" width="12" height="8" viewBox="0 0 12 8"><path d="M0 0 H12 L6 7 Z" fill="#d8d8d8"/></svg>
<div style="position:absolute;left:55px;top:1340px;width:2px;height:34px;background:#1e1e1e;"></div>
<div style="position:absolute;left:81px;top:173px;width:1102px;height:698px;background:#333333;"></div>
<svg style="position:absolute;left:81px;top:173px;" width="1102" height="698" viewBox="0 0 1102 698"><defs><filter id="n1" x="0" y="0" width="100%" height="100%" color-interpolation-filters="sRGB"><feTurbulence type="fractalNoise" baseFrequency="0.05 0.3" numOctaves="3" seed="3"/><feColorMatrix type="matrix" values="1 0 0 0 0  1 0 0 0 0  1 0 0 0 0  0 0 0 0 1"/><feComponentTransfer><feFuncR type="linear" slope="1.6" intercept="-0.30000000000000004"/><feFuncG type="linear" slope="1.6" intercept="-0.30000000000000004"/><feFuncB type="linear" slope="1.6" intercept="-0.30000000000000004"/></feComponentTransfer></filter><filter id="n2" x="0" y="0" width="100%" height="100%" color-interpolation-filters="sRGB"><feTurbulence type="fractalNoise" baseFrequency="0.15" numOctaves="3" seed="7"/><feColorMatrix type="matrix" values="1 0 0 0 0  1 0 0 0 0  1 0 0 0 0  0 0 0 0 1"/><feComponentTransfer><feFuncR type="linear" slope="1.5" intercept="-0.25"/><feFuncG type="linear" slope="1.5" intercept="-0.25"/><feFuncB type="linear" slope="1.5" intercept="-0.25"/></feComponentTransfer></filter><radialGradient id="cg" cx="0.5" cy="0.5" r="0.5"><stop offset="0" stop-color="#bcbcbc"/><stop offset="0.85" stop-color="#c4c4c4"/><stop offset="0.97" stop-color="#d8d8d8"/><stop offset="1" stop-color="#f4f4f4"/></radialGradient><clipPath id="sq"><polygon points="263,46 788,213 648,682 106,542"/></clipPath><clipPath id="ci"><circle cx="450" cy="369" r="155"/></clipPath></defs><polygon points="263,46 788,213 648,682 106,542" fill="#262626"/><g clip-path="url(#sq)"><g transform="rotate(-60 450 369)"><rect x="-200" y="-250" width="1300" height="1250" filter="url(#n1)" opacity="0.09" style="mix-blend-mode:overlay"/></g></g><circle cx="450" cy="369" r="155" fill="url(#cg)"/><g clip-path="url(#ci)"><rect x="290" y="210" width="320" height="320" filter="url(#n2)" opacity="0.18" style="mix-blend-mode:overlay"/></g><circle cx="450" cy="369" r="154.5" fill="none" stroke="#fafafa" stroke-width="1.6"/><g stroke="#a8a014" stroke-width="1.3" fill="none" stroke-dasharray="7 6"><path d="M373 4 L299 336"/><path d="M677 53 L599 404"/><path d="M354 95 L653 159"/><path d="M445 6 L676 56"/><path d="M450 -2 L672 48"/></g><path d="M354 95 l10 -5 M354 95 l9 6 M653 159 l-10 -7 M653 159 l-9 6" stroke="#a8a014" stroke-width="1.3"/></svg>
<div style="position:absolute;left:527px;top:258px;font-size:21px;color:#dcdcdc;transform:rotate(15deg);transform-origin:0 0;white-space:nowrap;text-shadow:-1px 0 #111,1px 0 #111,0 1px #111,0 -1px #111,1px 1px #111;">D 5.8829 mm</div>
<div style="position:absolute;left:81px;top:173px;width:1102px;height:200px;overflow:hidden;"><div style="position:absolute;left:494px;top:-15px;font-size:21px;color:#dcdcdc;transform:rotate(15deg);transform-origin:0 0;white-space:nowrap;text-shadow:-1px 0 #111,1px 0 #111,0 1px #111,0 -1px #111,1px 1px #111;">1.0594 mm</div></div>
<div style="position:absolute;left:81px;top:171px;width:1102px;height:2px;background:#1c1c1c;"></div>
<div style="position:absolute;left:99px;top:187.1px;line-height:20px;font-size:17px;color:#ffffff;white-space:nowrap;text-shadow:-1.2px 0 #000,1.2px 0 #000,0 -1.2px #000,0 1.2px #000,-1px -1px #000,1px 1px #000,1px -1px #000,-1px 1px #000,-1.2px 0 #000,1.2px 0 #000,0 -1.2px #000,0 1.2px #000;">Scene coordinate system</div>
<div style="position:absolute;left:99px;top:214.1px;line-height:20px;font-size:17px;color:#ffffff;white-space:nowrap;text-shadow:-1.2px 0 #000,1.2px 0 #000,0 -1.2px #000,0 1.2px #000,-1px -1px #000,1px 1px #000,1px -1px #000,-1px 1px #000,-1.2px 0 #000,1.2px 0 #000,0 -1.2px #000,0 1.2px #000;">-6.2935 mm</div>
<div style="position:absolute;left:112px;top:299.9px;line-height:24px;font-size:20.5px;color:#ffffff;white-space:nowrap;text-shadow:-1.2px 0 #000,1.2px 0 #000,0 -1.2px #000,0 1.2px #000,-1px -1px #000,1px 1px #000,1px -1px #000,-1px 1px #000,-1.2px 0 #000,1.2px 0 #000,0 -1.2px #000,0 1.2px #000;">Volume [mm&sup3;]</div>
<svg style="position:absolute;left:111px;top:326px;" width="20" height="428" viewBox="0 0 20 428"><defs><linearGradient id="cb1447" x1="0" y1="0" x2="0" y2="1"><stop offset="0" stop-color="#ff0000"/><stop offset="0.1" stop-color="#f84000"/><stop offset="0.2" stop-color="#e08000"/><stop offset="0.3" stop-color="#a8c800"/><stop offset="0.4" stop-color="#40f000"/><stop offset="0.5" stop-color="#00ff00"/><stop offset="0.6" stop-color="#00e070"/><stop offset="0.7" stop-color="#00c8b0"/><stop offset="0.8" stop-color="#0098d8"/><stop offset="0.9" stop-color="#0050f0"/><stop offset="1" stop-color="#0000ff"/></linearGradient></defs><rect x="0" y="0" width="19" height="427" fill="#000"/><rect x="1" y="1" width="17" height="18" fill="#ff0090"/><rect x="1" y="20" width="17" height="389" fill="url(#cb1447)"/><rect x="1" y="409" width="17" height="17" fill="#a000f0"/></svg>
<div style="position:absolute;left:136px;top:332.9px;line-height:24px;font-size:20.5px;color:#ffffff;white-space:nowrap;text-shadow:-1.2px 0 #000,1.2px 0 #000,0 -1.2px #000,0 1.2px #000,-1px -1px #000,1px 1px #000,1px -1px #000,-1px 1px #000,-1.2px 0 #000,1.2px 0 #000,0 -1.2px #000,0 1.2px #000;">0.006</div>
<div style="position:absolute;left:136px;top:371.9px;line-height:24px;font-size:20.5px;color:#ffffff;white-space:nowrap;text-shadow:-1.2px 0 #000,1.2px 0 #000,0 -1.2px #000,0 1.2px #000,-1px -1px #000,1px 1px #000,1px -1px #000,-1px 1px #000,-1.2px 0 #000,1.2px 0 #000,0 -1.2px #000,0 1.2px #000;">0.006</div>
<div style="position:absolute;left:136px;top:410.8px;line-height:24px;font-size:20.5px;color:#ffffff;white-space:nowrap;text-shadow:-1.2px 0 #000,1.2px 0 #000,0 -1.2px #000,0 1.2px #000,-1px -1px #000,1px 1px #000,1px -1px #000,-1px 1px #000,-1.2px 0 #000,1.2px 0 #000,0 -1.2px #000,0 1.2px #000;">0.005</div>
<div style="position:absolute;left:136px;top:449.8px;line-height:24px;font-size:20.5px;color:#ffffff;white-space:nowrap;text-shadow:-1.2px 0 #000,1.2px 0 #000,0 -1.2px #000,0 1.2px #000,-1px -1px #000,1px 1px #000,1px -1px #000,-1px 1px #000,-1.2px 0 #000,1.2px 0 #000,0 -1.2px #000,0 1.2px #000;">0.005</div>
<div style="position:absolute;left:136px;top:488.7px;line-height:24px;font-size:20.5px;color:#ffffff;white-space:nowrap;text-shadow:-1.2px 0 #000,1.2px 0 #000,0 -1.2px #000,0 1.2px #000,-1px -1px #000,1px 1px #000,1px -1px #000,-1px 1px #000,-1.2px 0 #000,1.2px 0 #000,0 -1.2px #000,0 1.2px #000;">0.004</div>
<div style="position:absolute;left:136px;top:527.7px;line-height:24px;font-size:20.5px;color:#ffffff;white-space:nowrap;text-shadow:-1.2px 0 #000,1.2px 0 #000,0 -1.2px #000,0 1.2px #000,-1px -1px #000,1px 1px #000,1px -1px #000,-1px 1px #000,-1.2px 0 #000,1.2px 0 #000,0 -1.2px #000,0 1.2px #000;">0.003</div>
<div style="position:absolute;left:136px;top:566.7px;line-height:24px;font-size:20.5px;color:#ffffff;white-space:nowrap;text-shadow:-1.2px 0 #000,1.2px 0 #000,0 -1.2px #000,0 1.2px #000,-1px -1px #000,1px 1px #000,1px -1px #000,-1px 1px #000,-1.2px 0 #000,1.2px 0 #000,0 -1.2px #000,0 1.2px #000;">0.003</div>
<div style="position:absolute;left:136px;top:605.6px;line-height:24px;font-size:20.5px;color:#ffffff;white-space:nowrap;text-shadow:-1.2px 0 #000,1.2px 0 #000,0 -1.2px #000,0 1.2px #000,-1px -1px #000,1px 1px #000,1px -1px #000,-1px 1px #000,-1.2px 0 #000,1.2px 0 #000,0 -1.2px #000,0 1.2px #000;">0.002</div>
<div style="position:absolute;left:136px;top:644.6px;line-height:24px;font-size:20.5px;color:#ffffff;white-space:nowrap;text-shadow:-1.2px 0 #000,1.2px 0 #000,0 -1.2px #000,0 1.2px #000,-1px -1px #000,1px 1px #000,1px -1px #000,-1px 1px #000,-1.2px 0 #000,1.2px 0 #000,0 -1.2px #000,0 1.2px #000;">0.002</div>
<div style="position:absolute;left:136px;top:683.5px;line-height:24px;font-size:20.5px;color:#ffffff;white-space:nowrap;text-shadow:-1.2px 0 #000,1.2px 0 #000,0 -1.2px #000,0 1.2px #000,-1px -1px #000,1px 1px #000,1px -1px #000,-1px 1px #000,-1.2px 0 #000,1.2px 0 #000,0 -1.2px #000,0 1.2px #000;">0.001</div>
<div style="position:absolute;left:136px;top:722.5px;line-height:24px;font-size:20.5px;color:#ffffff;white-space:nowrap;text-shadow:-1.2px 0 #000,1.2px 0 #000,0 -1.2px #000,0 1.2px #000,-1px -1px #000,1px 1px #000,1px -1px #000,-1px 1px #000,-1.2px 0 #000,1.2px 0 #000,0 -1.2px #000,0 1.2px #000;">0.001</div>
<div style="position:absolute;right:1932px;top:187.1px;line-height:20px;font-size:17px;color:#ffffff;white-space:nowrap;text-align:right;text-shadow:-1.2px 0 #000,1.2px 0 #000,0 -1.2px #000,0 1.2px #000,-1px -1px #000,1px 1px #000,1px -1px #000,-1px 1px #000,-1.2px 0 #000,1.2px 0 #000,0 -1.2px #000,0 1.2px #000;">Top 1</div>
<svg style="position:absolute;left:1189px;top:185px;" width="12" height="13" viewBox="0 0 12 13"><rect x="1.5" y="1.5" width="9" height="10" fill="none" stroke="#ddd" stroke-width="1.5"/><rect x="1.5" y="1.5" width="9" height="3" fill="#ddd"/></svg>
<div style="position:absolute;left:1183px;top:202px;width:24px;height:573px;background:#232323;"></div>
<svg style="position:absolute;left:1189px;top:205px;" width="12" height="10" viewBox="0 0 12 10"><path d="M0 9 L6 2 L12 9 Z" fill="#ddd"/></svg>
<svg style="position:absolute;left:1189px;top:762px;" width="12" height="10" viewBox="0 0 12 10"><path d="M0 1 L6 8 L12 1 Z" fill="#ddd"/></svg>
<div style="position:absolute;left:1187px;top:394px;width:17px;height:179px;background:#7f9fe0;"></div>
<svg style="position:absolute;left:1186px;top:777px;" width="22" height="90" viewBox="0 0 22 90"><path d="M2 6 V2 H6 M16 2 H20 V6 M20 16 V20 H16 M6 20 H2 V16" stroke="#ddd" fill="none" stroke-width="1.5"/><rect x="7" y="7" width="8" height="8" fill="none" stroke="#ddd" stroke-width="1.5"/><circle cx="9" cy="33" r="6" fill="none" stroke="#ddd" stroke-width="1.6"/><path d="M13 37 L19 43" stroke="#ddd" stroke-width="2.5"/><circle cx="9" cy="56" r="6" fill="none" stroke="#ddd" stroke-width="1.6"/><path d="M13 60 L19 66 M6 56 H12 M9 53 V59" stroke="#ddd" stroke-width="1.6"/><circle cx="9" cy="79" r="6" fill="none" stroke="#ddd" stroke-width="1.6"/><path d="M13 83 L19 89 M6 79 H12" stroke="#ddd" stroke-width="1.6"/></svg>
<div style="position:absolute;right:1933px;top:847.1px;line-height:20px;font-size:17px;color:#ffffff;white-space:nowrap;text-align:right;text-shadow:-1.2px 0 #000,1.2px 0 #000,0 -1.2px #000,0 1.2px #000,-1px -1px #000,1px 1px #000,1px -1px #000,-1px 1px #000,-1.2px 0 #000,1.2px 0 #000,0 -1.2px #000,0 1.2px #000;">150%</div>
<svg style="position:absolute;left:586px;top:849px;" width="110" height="16" viewBox="0 0 110 16"><path d="M1 2 V13 H106 V2 M22 9 V13 M43 9 V13 M64 9 V13 M85 9 V13" stroke="#000" stroke-width="3" fill="none"/><path d="M1 2 V13 H106 V2 M22 9 V13 M43 9 V13 M64 9 V13 M85 9 V13" stroke="#fff" stroke-width="1.3" fill="none"/></svg>
<div style="position:absolute;left:698px;top:847.1px;line-height:20px;font-size:17px;color:#ffffff;white-space:nowrap;text-shadow:-1.2px 0 #000,1.2px 0 #000,0 -1.2px #000,0 1.2px #000,-1px -1px #000,1px 1px #000,1px -1px #000,-1px 1px #000,-1.2px 0 #000,1.2px 0 #000,0 -1.2px #000,0 1.2px #000;">2 mm</div>
<svg style="position:absolute;left:95px;top:822px;" width="60" height="50" viewBox="0 0 60 50"><path d="M5 44 V6" stroke="#1a8a1a" stroke-width="1.6"/><circle cx="5" cy="16" r="2.8" fill="#1a8a1a"/><path d="M5 44 H37" stroke="#c01a1a" stroke-width="1.6"/><circle cx="37" cy="44" r="2.8" fill="#c01a1a"/><circle cx="5" cy="44" r="3.2" fill="#1a3adf"/><text x="7" y="9" font-size="14" fill="#1a8a1a" font-family="Liberation Sans">Y</text><text x="6" y="40" font-size="14" fill="#1a3adf" font-family="Liberation Sans">Z</text><text x="42" y="42" font-size="14" fill="#c01a1a" font-family="Liberation Sans">X</text></svg>
<div style="position:absolute;left:81px;top:871px;width:1102px;height:29px;background:#333333;"></div>
<div style="position:absolute;left:96px;top:873px;width:135px;height:25px;background:#222222;"></div>
<div style="position:absolute;left:104px;top:876.1px;line-height:20px;font-size:17px;color:#e6e6e6;white-space:nowrap;">-6.2935 mm</div>
<svg style="position:absolute;left:233px;top:874px;" width="26" height="24" viewBox="0 0 26 24"><path d="M2 7 L5 4 L8 7 M2 17 L5 20 L8 17" fill="#bbb"/><path d="M5 6 V9 M5 15 V18" stroke="#aaa"/><path d="M17 1 V23 M14 4 L17 1 L20 4 M14 20 L17 23 L20 20 M13 1 H21 M13 23 H21" stroke="#ddd" stroke-width="1.2" fill="none"/></svg>
<svg style="position:absolute;left:254px;top:873px;" width="24" height="26" viewBox="0 0 24 26"><path d="M4 18 L14 6 L20 4 L18 10 L6 20 Z" fill="#bbb"/><path d="M4 14 L2 20 L8 18" fill="#999"/></svg>
<svg style="position:absolute;left:280px;top:873px;" width="24" height="26" viewBox="0 0 24 26"><circle cx="12" cy="12" r="10" fill="#3a3a3a" stroke="#555" stroke-width="1.5"/><path d="M12 2 A10 10 0 0 1 12 22 Z" fill="#222"/></svg>
<svg style="position:absolute;left:306px;top:873px;" width="24" height="26" viewBox="0 0 24 26"><path d="M12 2 V22 M2 12 H22" stroke="#eee" stroke-width="3"/><path d="M12 0 L8 5 H16Z M12 24 L8 19 H16Z M0 12 L5 8 V16Z M24 12 L19 8 V16Z" fill="#eee"/></svg>
<svg style="position:absolute;left:331px;top:873px;" width="24" height="26" viewBox="0 0 24 26"><defs><linearGradient id="gw873" x1="0" x2="1"><stop offset="0" stop-color="#000"/><stop offset="0.7" stop-color="#fff"/></linearGradient></defs><rect x="3" y="1" width="18" height="22" fill="url(#gw873)"/></svg>
<svg style="position:absolute;left:358px;top:873px;" width="24" height="26" viewBox="0 0 24 26"><path d="M2 22 L22 4 V22 Z" fill="#0090d0"/><path d="M2 22 L11 14 V22 Z" fill="#c00"/></svg>
<svg style="position:absolute;left:384px;top:873px;" width="24" height="26" viewBox="0 0 24 26"><path d="M7 1 L15 15 M17 1 L9 15" stroke="#1a9fe0" stroke-width="2"/><circle cx="7" cy="19" r="3.5" fill="none" stroke="#1a9fe0" stroke-width="2"/><circle cx="17" cy="19" r="3.5" fill="none" stroke="#1a9fe0" stroke-width="2"/></svg>
<svg style="position:absolute;left:408px;top:873px;" width="24" height="26" viewBox="0 0 24 26"><path d="M2 18 L8 6 H22 L16 18 Z" fill="#1040a0" stroke="#ddd"/></svg>
<svg style="position:absolute;left:434px;top:873px;" width="24" height="26" viewBox="0 0 24 26"><rect x="0.5" y="0.5" width="23" height="25" fill="#555" stroke="#1a1a1a"/><path d="M5 14 V19 H19 V14 M9.5 16 V19 M14 16 V19" stroke="#eee" fill="none" stroke-width="1.5"/></svg>
<svg style="position:absolute;left:457px;top:873px;" width="24" height="26" viewBox="0 0 24 26"><path d="M4 18 Q10 12 18 6" stroke="#999" stroke-width="2" fill="none"/></svg>
<svg style="position:absolute;left:482px;top:873px;" width="24" height="26" viewBox="0 0 24 26"><path d="M4 18 Q12 16 18 6" stroke="#20c0c0" stroke-width="2.2" fill="none"/></svg>
<svg style="position:absolute;left:510px;top:873px;" width="24" height="26" viewBox="0 0 24 26"><rect x="4" y="4" width="16" height="16" fill="#777"/><path d="M3 3 L21 21 M21 3 L3 21" stroke="#e00" stroke-width="3"/></svg>
<div style="position:absolute;left:536px;top:873px;width:647px;height:25px;background:#222222;"></div>
<svg style="position:absolute;left:539px;top:879px;" width="10" height="14" viewBox="0 0 10 14"><path d="M9 0 L1 7 L9 14 Z" fill="#ddd"/></svg>
<svg style="position:absolute;left:1169px;top:879px;" width="10" height="14" viewBox="0 0 10 14"><path d="M1 0 L9 7 L1 14 Z" fill="#ddd"/></svg>
<div style="position:absolute;left:754px;top:877px;width:264px;height:17px;background:#7f9fe0;"></div>
<div style="position:absolute;left:82px;top:853px;width:6px;height:109px;background:#7f9fe0;"></div>
<div style="position:absolute;left:1207px;top:173px;width:261px;height:698px;background:#333333;"></div>
<div style="position:absolute;left:1207px;top:171px;width:261px;height:2px;background:#1c1c1c;"></div>
<div style="position:absolute;left:1223px;top:187.1px;line-height:20px;font-size:17px;color:#ffffff;white-space:nowrap;text-shadow:-1.2px 0 #000,1.2px 0 #000,0 -1.2px #000,0 1.2px #000,-1px -1px #000,1px 1px #000,1px -1px #000,-1px 1px #000,-1.2px 0 #000,1.2px 0 #000,0 -1.2px #000,0 1.2px #000;">Scene coordinate system</div>
<div style="position:absolute;left:1223px;top:214.1px;line-height:20px;font-size:17px;color:#ffffff;white-space:nowrap;text-shadow:-1.2px 0 #000,1.2px 0 #000,0 -1.2px #000,0 1.2px #000,-1px -1px #000,1px 1px #000,1px -1px #000,-1px 1px #000,-1.2px 0 #000,1.2px 0 #000,0 -1.2px #000,0 1.2px #000;">2.0804 mm</div>
<div style="position:absolute;left:1237px;top:299.9px;line-height:24px;font-size:20.5px;color:#ffffff;white-space:nowrap;text-shadow:-1.2px 0 #000,1.2px 0 #000,0 -1.2px #000,0 1.2px #000,-1px -1px #000,1px 1px #000,1px -1px #000,-1px 1px #000,-1.2px 0 #000,1.2px 0 #000,0 -1.2px #000,0 1.2px #000;">Volume [mm&sup3;]</div>
<svg style="position:absolute;left:1236px;top:326px;" width="20" height="428" viewBox="0 0 20 428"><defs><linearGradient id="cb12697" x1="0" y1="0" x2="0" y2="1"><stop offset="0" stop-color="#ff0000"/><stop offset="0.1" stop-color="#f84000"/><stop offset="0.2" stop-color="#e08000"/><stop offset="0.3" stop-color="#a8c800"/><stop offset="0.4" stop-color="#40f000"/><stop offset="0.5" stop-color="#00ff00"/><stop offset="0.6" stop-color="#00e070"/><stop offset="0.7" stop-color="#00c8b0"/><stop offset="0.8" stop-color="#0098d8"/><stop offset="0.9" stop-color="#0050f0"/><stop offset="1" stop-color="#0000ff"/></linearGradient></defs><rect x="0" y="0" width="19" height="427" fill="#000"/><rect x="1" y="1" width="17" height="18" fill="#ff0090"/><rect x="1" y="20" width="17" height="389" fill="url(#cb12697)"/><rect x="1" y="409" width="17" height="17" fill="#a000f0"/></svg>
<div style="position:absolute;left:1261px;top:332.9px;line-height:24px;font-size:20.5px;color:#ffffff;white-space:nowrap;text-shadow:-1.2px 0 #000,1.2px 0 #000,0 -1.2px #000,0 1.2px #000,-1px -1px #000,1px 1px #000,1px -1px #000,-1px 1px #000,-1.2px 0 #000,1.2px 0 #000,0 -1.2px #000,0 1.2px #000;">0.006</div>
<div style="position:absolute;left:1261px;top:371.9px;line-height:24px;font-size:20.5px;color:#ffffff;white-space:nowrap;text-shadow:-1.2px 0 #000,1.2px 0 #000,0 -1.2px #000,0 1.2px #000,-1px -1px #000,1px 1px #000,1px -1px #000,-1px 1px #000,-1.2px 0 #000,1.2px 0 #000,0 -1.2px #000,0 1.2px #000;">0.006</div>
<div style="position:absolute;left:1261px;top:410.8px;line-height:24px;font-size:20.5px;color:#ffffff;white-space:nowrap;text-shadow:-1.2px 0 #000,1.2px 0 #000,0 -1.2px #000,0 1.2px #000,-1px -1px #000,1px 1px #000,1px -1px #000,-1px 1px #000,-1.2px 0 #000,1.2px 0 #000,0 -1.2px #000,0 1.2px #000;">0.005</div>
<div style="position:absolute;left:1261px;top:449.8px;line-height:24px;font-size:20.5px;color:#ffffff;white-space:nowrap;text-shadow:-1.2px 0 #000,1.2px 0 #000,0 -1.2px #000,0 1.2px #000,-1px -1px #000,1px 1px #000,1px -1px #000,-1px 1px #000,-1.2px 0 #000,1.2px 0 #000,0 -1.2px #000,0 1.2px #000;">0.005</div>
<div style="position:absolute;left:1261px;top:488.7px;line-height:24px;font-size:20.5px;color:#ffffff;white-space:nowrap;text-shadow:-1.2px 0 #000,1.2px 0 #000,0 -1.2px #000,0 1.2px #000,-1px -1px #000,1px 1px #000,1px -1px #000,-1px 1px #000,-1.2px 0 #000,1.2px 0 #000,0 -1.2px #000,0 1.2px #000;">0.004</div>
<div style="position:absolute;left:1261px;top:527.7px;line-height:24px;font-size:20.5px;color:#ffffff;white-space:nowrap;text-shadow:-1.2px 0 #000,1.2px 0 #000,0 -1.2px #000,0 1.2px #000,-1px -1px #000,1px 1px #000,1px -1px #000,-1px 1px #000,-1.2px 0 #000,1.2px 0 #000,0 -1.2px #000,0 1.2px #000;">0.003</div>
<div style="position:absolute;left:1261px;top:566.7px;line-height:24px;font-size:20.5px;color:#ffffff;white-space:nowrap;text-shadow:-1.2px 0 #000,1.2px 0 #000,0 -1.2px #000,0 1.2px #000,-1px -1px #000,1px 1px #000,1px -1px #000,-1px 1px #000,-1.2px 0 #000,1.2px 0 #000,0 -1.2px #000,0 1.2px #000;">0.003</div>
<div style="position:absolute;left:1261px;top:605.6px;line-height:24px;font-size:20.5px;color:#ffffff;white-space:nowrap;text-shadow:-1.2px 0 #000,1.2px 0 #000,0 -1.2px #000,0 1.2px #000,-1px -1px #000,1px 1px #000,1px -1px #000,-1px 1px #000,-1.2px 0 #000,1.2px 0 #000,0 -1.2px #000,0 1.2px #000;">0.002</div>
<div style="position:absolute;left:1261px;top:644.6px;line-height:24px;font-size:20.5px;color:#ffffff;white-space:nowrap;text-shadow:-1.2px 0 #000,1.2px 0 #000,0 -1.2px #000,0 1.2px #000,-1px -1px #000,1px 1px #000,1px -1px #000,-1px 1px #000,-1.2px 0 #000,1.2px 0 #000,0 -1.2px #000,0 1.2px #000;">0.002</div>
<div style="position:absolute;left:1261px;top:683.5px;line-height:24px;font-size:20.5px;color:#ffffff;white-space:nowrap;text-shadow:-1.2px 0 #000,1.2px 0 #000,0 -1.2px #000,0 1.2px #000,-1px -1px #000,1px 1px #000,1px -1px #000,-1px 1px #000,-1.2px 0 #000,1.2px 0 #000,0 -1.2px #000,0 1.2px #000;">0.001</div>
<div style="position:absolute;left:1261px;top:722.5px;line-height:24px;font-size:20.5px;color:#ffffff;white-space:nowrap;text-shadow:-1.2px 0 #000,1.2px 0 #000,0 -1.2px #000,0 1.2px #000,-1px -1px #000,1px 1px #000,1px -1px #000,-1px 1px #000,-1.2px 0 #000,1.2px 0 #000,0 -1.2px #000,0 1.2px #000;">0.001</div>
<svg style="position:absolute;left:1219px;top:822px;" width="60" height="50" viewBox="0 0 60 50"><path d="M5 44 V6" stroke="#1a3adf" stroke-width="1.6"/><circle cx="5" cy="16" r="2.8" fill="#1a3adf"/><path d="M5 44 H37" stroke="#1a8a1a" stroke-width="1.6"/><circle cx="37" cy="44" r="2.8" fill="#1a8a1a"/><circle cx="5" cy="44" r="3.2" fill="#c01a1a"/><text x="7" y="9" font-size="14" fill="#1a3adf" font-family="Liberation Sans">Z</text><text x="6" y="40" font-size="14" fill="#c01a1a" font-family="Liberation Sans">X</text><text x="42" y="42" font-size="14" fill="#1a8a1a" font-family="Liberation Sans">Y</text></svg>
<div style="position:absolute;left:1207px;top:869px;width:261px;height:42px;background:#333333;"></div>
<div style="position:absolute;left:1221px;top:873px;width:135px;height:25px;background:#222222;"></div>
<div style="position:absolute;left:1229px;top:876.1px;line-height:20px;font-size:17px;color:#e6e6e6;white-space:nowrap;">2.0804 mm</div>
<svg style="position:absolute;left:1358px;top:874px;" width="26" height="24" viewBox="0 0 26 24"><path d="M2 7 L5 4 L8 7 M2 17 L5 20 L8 17" fill="#bbb"/><path d="M5 6 V9 M5 15 V18" stroke="#aaa"/><path d="M17 1 V23 M14 4 L17 1 L20 4 M14 20 L17 23 L20 20 M13 1 H21 M13 23 H21" stroke="#ddd" stroke-width="1.2" fill="none"/></svg>
<svg style="position:absolute;left:1381px;top:873px;" width="24" height="26" viewBox="0 0 24 26"><path d="M4 18 L14 6 L20 4 L18 10 L6 20 Z" fill="#bbb"/></svg>
<svg style="position:absolute;left:1405px;top:873px;" width="24" height="26" viewBox="0 0 24 26"><circle cx="12" cy="12" r="10" fill="#3a3a3a" stroke="#555" stroke-width="1.5"/><path d="M12 2 A10 10 0 0 1 12 22 Z" fill="#222"/></svg>
<svg style="position:absolute;left:1431px;top:873px;" width="24" height="26" viewBox="0 0 24 26"><path d="M12 2 V22 M2 12 H22" stroke="#eee" stroke-width="3"/><path d="M12 0 L8 5 H16Z M12 24 L8 19 H16Z M0 12 L5 8 V16Z M24 12 L19 8 V16Z" fill="#eee"/></svg>
<div style="position:absolute;left:1457px;top:875px;width:9px;height:21px;background:#111;"></div>
<svg style="position:absolute;left:96px;top:911px;" width="1087" height="692" viewBox="0 0 1087 692"><defs><filter id="n3" x="0" y="0" width="100%" height="100%" color-interpolation-filters="sRGB"><feTurbulence type="fractalNoise" baseFrequency="0.09" numOctaves="3" seed="11"/><feColorMatrix type="matrix" values="1 0 0 0 0  1 0 0 0 0  1 0 0 0 0  0 0 0 0 1"/><feComponentTransfer><feFuncR type="linear" slope="1.5" intercept="-0.25"/><feFuncG type="linear" slope="1.5" intercept="-0.25"/><feFuncB type="linear" slope="1.5" intercept="-0.25"/></feComponentTransfer></filter><linearGradient id="lg1" x1="0" x2="1"><stop offset="0" stop-color="#2e2e2e"/><stop offset="0.55" stop-color="#262626"/><stop offset="0.88" stop-color="#3a3a3a"/><stop offset="1" stop-color="#8a8a8a"/></linearGradient><linearGradient id="lg2" x1="0" x2="1"><stop offset="0" stop-color="#d8d8d8"/><stop offset="0.06" stop-color="#b8b8b8"/><stop offset="0.94" stop-color="#b4b4b4"/><stop offset="1" stop-color="#d4d4d4"/></linearGradient><linearGradient id="lg3" x1="0" x2="1"><stop offset="0" stop-color="#707070"/><stop offset="0.15" stop-color="#2a2a2a"/><stop offset="1" stop-color="#2c2c2c"/></linearGradient></defs><rect x="0" y="0" width="117" height="692" fill="url(#lg1)"/><rect x="116" y="0" width="840" height="692" fill="url(#lg2)"/><rect x="954" y="0" width="133" height="692" fill="url(#lg3)"/><rect x="0" y="0" width="1087" height="692" filter="url(#n3)" opacity="0.11" style="mix-blend-mode:overlay"/><path d="M116 0 L114 60 L118 120 L113 200 L117 300 L112 400 L116 500 L113 600 L116 692" stroke="#f4f4f4" stroke-width="2" fill="none"/><path d="M958 0 L952 60 L956 120 L960 200 L956 300 L958 380 L952 450 L957 520 L955 600 L957 692" stroke="#f4f4f4" stroke-width="2" fill="none"/><path d="M19 0 V560 L21 600 L20 692" stroke="#20c0c8" stroke-width="2.5" fill="none"/><path d="M1065 0 V692" stroke="#20c0c8" stroke-width="2.5" fill="none"/><ellipse cx="327" cy="491" rx="6" ry="3.5" fill="#c8a800"/><path d="M330 491 H337" stroke="#c8a800" stroke-width="2"/></svg>
<div style="position:absolute;left:99px;top:918.1px;line-height:20px;font-size:17px;color:#ffffff;white-space:nowrap;text-shadow:-1.2px 0 #000,1.2px 0 #000,0 -1.2px #000,0 1.2px #000,-1px -1px #000,1px 1px #000,1px -1px #000,-1px 1px #000,-1.2px 0 #000,1.2px 0 #000,0 -1.2px #000,0 1.2px #000;">Scene coordinate system</div>
<div style="position:absolute;left:99px;top:945.1px;line-height:20px;font-size:17px;color:#ffffff;white-space:nowrap;text-shadow:-1.2px 0 #000,1.2px 0 #000,0 -1.2px #000,0 1.2px #000,-1px -1px #000,1px 1px #000,1px -1px #000,-1px 1px #000,-1.2px 0 #000,1.2px 0 #000,0 -1.2px #000,0 1.2px #000;">0.3238 mm</div>
<div style="position:absolute;left:112px;top:1030.9px;line-height:24px;font-size:20.5px;color:#ffffff;white-space:nowrap;text-shadow:-1.2px 0 #000,1.2px 0 #000,0 -1.2px #000,0 1.2px #000,-1px -1px #000,1px 1px #000,1px -1px #000,-1px 1px #000,-1.2px 0 #000,1.2px 0 #000,0 -1.2px #000,0 1.2px #000;">Volume [mm&sup3;]</div>
<svg style="position:absolute;left:111px;top:1058px;" width="20" height="428" viewBox="0 0 20 428"><defs><linearGradient id="cb2179" x1="0" y1="0" x2="0" y2="1"><stop offset="0" stop-color="#ff0000"/><stop offset="0.1" stop-color="#f84000"/><stop offset="0.2" stop-color="#e08000"/><stop offset="0.3" stop-color="#a8c800"/><stop offset="0.4" stop-color="#40f000"/><stop offset="0.5" stop-color="#00ff00"/><stop offset="0.6" stop-color="#00e070"/><stop offset="0.7" stop-color="#00c8b0"/><stop offset="0.8" stop-color="#0098d8"/><stop offset="0.9" stop-color="#0050f0"/><stop offset="1" stop-color="#0000ff"/></linearGradient></defs><rect x="0" y="0" width="19" height="427" fill="#000"/><rect x="1" y="1" width="17" height="18" fill="#ff0090"/><rect x="1" y="20" width="17" height="389" fill="url(#cb2179)"/><rect x="1" y="409" width="17" height="17" fill="#a000f0"/></svg>
<div style="position:absolute;left:136px;top:1064.9px;line-height:24px;font-size:20.5px;color:#ffffff;white-space:nowrap;text-shadow:-1.2px 0 #000,1.2px 0 #000,0 -1.2px #000,0 1.2px #000,-1px -1px #000,1px 1px #000,1px -1px #000,-1px 1px #000,-1.2px 0 #000,1.2px 0 #000,0 -1.2px #000,0 1.2px #000;">0.006</div>
<div style="position:absolute;left:136px;top:1103.9px;line-height:24px;font-size:20.5px;color:#ffffff;white-space:nowrap;text-shadow:-1.2px 0 #000,1.2px 0 #000,0 -1.2px #000,0 1.2px #000,-1px -1px #000,1px 1px #000,1px -1px #000,-1px 1px #000,-1.2px 0 #000,1.2px 0 #000,0 -1.2px #000,0 1.2px #000;">0.006</div>
<div style="position:absolute;left:136px;top:1142.8px;line-height:24px;font-size:20.5px;color:#ffffff;white-space:nowrap;text-shadow:-1.2px 0 #000,1.2px 0 #000,0 -1.2px #000,0 1.2px #000,-1px -1px #000,1px 1px #000,1px -1px #000,-1px 1px #000,-1.2px 0 #000,1.2px 0 #000,0 -1.2px #000,0 1.2px #000;">0.005</div>
<div style="position:absolute;left:136px;top:1181.8px;line-height:24px;font-size:20.5px;color:#ffffff;white-space:nowrap;text-shadow:-1.2px 0 #000,1.2px 0 #000,0 -1.2px #000,0 1.2px #000,-1px -1px #000,1px 1px #000,1px -1px #000,-1px 1px #000,-1.2px 0 #000,1.2px 0 #000,0 -1.2px #000,0 1.2px #000;">0.005</div>
<div style="position:absolute;left:136px;top:1220.7px;line-height:24px;font-size:20.5px;color:#ffffff;white-space:nowrap;text-shadow:-1.2px 0 #000,1.2px 0 #000,0 -1.2px #000,0 1.2px #000,-1px -1px #000,1px 1px #000,1px -1px #000,-1px 1px #000,-1.2px 0 #000,1.2px 0 #000,0 -1.2px #000,0 1.2px #000;">0.004</div>
<div style="position:absolute;left:136px;top:1259.7px;line-height:24px;font-size:20.5px;color:#ffffff;white-space:nowrap;text-shadow:-1.2px 0 #000,1.2px 0 #000,0 -1.2px #000,0 1.2px #000,-1px -1px #000,1px 1px #000,1px -1px #000,-1px 1px #000,-1.2px 0 #000,1.2px 0 #000,0 -1.2px #000,0 1.2px #000;">0.003</div>
<div style="position:absolute;left:136px;top:1298.7px;line-height:24px;font-size:20.5px;color:#ffffff;white-space:nowrap;text-shadow:-1.2px 0 #000,1.2px 0 #000,0 -1.2px #000,0 1.2px #000,-1px -1px #000,1px 1px #000,1px -1px #000,-1px 1px #000,-1.2px 0 #000,1.2px 0 #000,0 -1.2px #000,0 1.2px #000;">0.003</div>
<div style="position:absolute;left:136px;top:1337.6px;line-height:24px;font-size:20.5px;color:#ffffff;white-space:nowrap;text-shadow:-1.2px 0 #000,1.2px 0 #000,0 -1.2px #000,0 1.2px #000,-1px -1px #000,1px 1px #000,1px -1px #000,-1px 1px #000,-1.2px 0 #000,1.2px 0 #000,0 -1.2px #000,0 1.2px #000;">0.002</div>
<div style="position:absolute;left:136px;top:1376.6px;line-height:24px;font-size:20.5px;color:#ffffff;white-space:nowrap;text-shadow:-1.2px 0 #000,1.2px 0 #000,0 -1.2px #000,0 1.2px #000,-1px -1px #000,1px 1px #000,1px -1px #000,-1px 1px #000,-1.2px 0 #000,1.2px 0 #000,0 -1.2px #000,0 1.2px #000;">0.002</div>
<div style="position:absolute;left:136px;top:1415.5px;line-height:24px;font-size:20.5px;color:#ffffff;white-space:nowrap;text-shadow:-1.2px 0 #000,1.2px 0 #000,0 -1.2px #000,0 1.2px #000,-1px -1px #000,1px 1px #000,1px -1px #000,-1px 1px #000,-1.2px 0 #000,1.2px 0 #000,0 -1.2px #000,0 1.2px #000;">0.001</div>
<div style="position:absolute;left:136px;top:1454.5px;line-height:24px;font-size:20.5px;color:#ffffff;white-space:nowrap;text-shadow:-1.2px 0 #000,1.2px 0 #000,0 -1.2px #000,0 1.2px #000,-1px -1px #000,1px 1px #000,1px -1px #000,-1px 1px #000,-1.2px 0 #000,1.2px 0 #000,0 -1.2px #000,0 1.2px #000;">0.001</div>
<div style="position:absolute;right:1932px;top:919.1px;line-height:20px;font-size:17px;color:#ffffff;white-space:nowrap;text-align:right;text-shadow:-1.2px 0 #000,1.2px 0 #000,0 -1.2px #000,0 1.2px #000,-1px -1px #000,1px 1px #000,1px -1px #000,-1px 1px #000,-1.2px 0 #000,1.2px 0 #000,0 -1.2px #000,0 1.2px #000;">Front 1</div>
<div style="position:absolute;left:1183px;top:911px;width:24px;height:692px;background:#333333;"></div>
<svg style="position:absolute;left:1189px;top:917px;" width="12" height="13" viewBox="0 0 12 13"><rect x="1.5" y="1.5" width="9" height="10" fill="none" stroke="#ddd" stroke-width="1.5"/><rect x="1.5" y="1.5" width="9" height="3" fill="#ddd"/></svg>
<div style="position:absolute;left:1183px;top:935px;width:24px;height:572px;background:#232323;"></div>
<svg style="position:absolute;left:1189px;top:938px;" width="12" height="10" viewBox="0 0 12 10"><path d="M0 9 L6 2 L12 9 Z" fill="#ddd"/></svg>
<svg style="position:absolute;left:1189px;top:1494px;" width="12" height="10" viewBox="0 0 12 10"><path d="M0 1 L6 8 L12 1 Z" fill="#ddd"/></svg>
<div style="position:absolute;left:1187px;top:1258px;width:17px;height:49px;background:#7f9fe0;"></div>
<svg style="position:absolute;left:1186px;top:1509px;" width="22" height="90" viewBox="0 0 22 90"><path d="M2 6 V2 H6 M16 2 H20 V6 M20 16 V20 H16 M6 20 H2 V16" stroke="#ddd" fill="none" stroke-width="1.5"/><rect x="7" y="7" width="8" height="8" fill="none" stroke="#ddd" stroke-width="1.5"/><circle cx="9" cy="33" r="6" fill="none" stroke="#ddd" stroke-width="1.6"/><path d="M13 37 L19 43" stroke="#ddd" stroke-width="2.5"/><circle cx="9" cy="56" r="6" fill="none" stroke="#ddd" stroke-width="1.6"/><path d="M13 60 L19 66 M6 56 H12 M9 53 V59" stroke="#ddd" stroke-width="1.6"/><circle cx="9" cy="79" r="6" fill="none" stroke="#ddd" stroke-width="1.6"/><path d="M13 83 L19 89 M6 79 H12" stroke="#ddd" stroke-width="1.6"/></svg>
<div style="position:absolute;right:1933px;top:1580.1px;line-height:20px;font-size:17px;color:#ffffff;white-space:nowrap;text-align:right;text-shadow:-1.2px 0 #000,1.2px 0 #000,0 -1.2px #000,0 1.2px #000,-1px -1px #000,1px 1px #000,1px -1px #000,-1px 1px #000,-1.2px 0 #000,1.2px 0 #000,0 -1.2px #000,0 1.2px #000;">413%</div>
<svg style="position:absolute;left:583px;top:1580px;" width="112" height="16" viewBox="0 0 112 16"><path d="M1 2 V13 H108 V2 M22 9 V13 M43 9 V13 M64 9 V13 M86 9 V13" stroke="#000" stroke-width="3" fill="none"/><path d="M1 2 V13 H108 V2 M22 9 V13 M43 9 V13 M64 9 V13 M86 9 V13" stroke="#fff" stroke-width="1.3" fill="none"/></svg>
<div style="position:absolute;left:700px;top:1581.1px;line-height:20px;font-size:17px;color:#ffffff;white-space:nowrap;text-shadow:-1.2px 0 #000,1.2px 0 #000,0 -1.2px #000,0 1.2px #000,-1px -1px #000,1px 1px #000,1px -1px #000,-1px 1px #000,-1.2px 0 #000,1.2px 0 #000,0 -1.2px #000,0 1.2px #000;">0.75 mm</div>
<svg style="position:absolute;left:95px;top:1550px;" width="60" height="52" viewBox="0 0 60 52"><path d="M6 46 V12" stroke="#1a3adf" stroke-width="1.6"/><circle cx="6" cy="16" r="2.5" fill="#1a3adf"/><path d="M6 46 H38" stroke="#c01a1a" stroke-width="1.6"/><circle cx="36" cy="46" r="2.5" fill="#c01a1a"/><text x="10" y="11" font-size="14" fill="#1a3adf" font-family="Liberation Sans">Z</text><text x="42" y="44" font-size="14" fill="#c01a1a" font-family="Liberation Sans">X</text></svg>
<div style="position:absolute;left:81px;top:1602px;width:1102px;height:29px;background:#333333;"></div>
<div style="position:absolute;left:96px;top:1604px;width:135px;height:25px;background:#222222;"></div>
<div style="position:absolute;left:104px;top:1607.1px;line-height:20px;font-size:17px;color:#e6e6e6;white-space:nowrap;">0.3238 mm</div>
<svg style="position:absolute;left:233px;top:1605px;" width="26" height="24" viewBox="0 0 26 24"><path d="M2 7 L5 4 L8 7 M2 17 L5 20 L8 17" fill="#bbb"/><path d="M5 6 V9 M5 15 V18" stroke="#aaa"/><path d="M17 1 V23 M14 4 L17 1 L20 4 M14 20 L17 23 L20 20 M13 1 H21 M13 23 H21" stroke="#ddd" stroke-width="1.2" fill="none"/></svg>
<svg style="position:absolute;left:254px;top:1604px;" width="24" height="26" viewBox="0 0 24 26"><path d="M4 18 L14 6 L20 4 L18 10 L6 20 Z" fill="#bbb"/><path d="M4 14 L2 20 L8 18" fill="#999"/></svg>
<svg style="position:absolute;left:280px;top:1604px;" width="24" height="26" viewBox="0 0 24 26"><circle cx="12" cy="12" r="10" fill="#3a3a3a" stroke="#555" stroke-width="1.5"/><path d="M12 2 A10 10 0 0 1 12 22 Z" fill="#222"/></svg>
<svg style="position:absolute;left:306px;top:1604px;" width="24" height="26" viewBox="0 0 24 26"><path d="M12 2 V22 M2 12 H22" stroke="#eee" stroke-width="3"/><path d="M12 0 L8 5 H16Z M12 24 L8 19 H16Z M0 12 L5 8 V16Z M24 12 L19 8 V16Z" fill="#eee"/></svg>
<svg style="position:absolute;left:331px;top:1604px;" width="24" height="26" viewBox="0 0 24 26"><defs><linearGradient id="gw1604" x1="0" x2="1"><stop offset="0" stop-color="#000"/><stop offset="0.7" stop-color="#fff"/></linearGradient></defs><rect x="3" y="1" width="18" height="22" fill="url(#gw1604)"/></svg>
<svg style="position:absolute;left:358px;top:1604px;" width="24" height="26" viewBox="0 0 24 26"><path d="M2 22 L22 4 V22 Z" fill="#0090d0"/><path d="M2 22 L11 14 V22 Z" fill="#c00"/></svg>
<svg style="position:absolute;left:384px;top:1604px;" width="24" height="26" viewBox="0 0 24 26"><path d="M7 1 L15 15 M17 1 L9 15" stroke="#1a9fe0" stroke-width="2"/><circle cx="7" cy="19" r="3.5" fill="none" stroke="#1a9fe0" stroke-width="2"/><circle cx="17" cy="19" r="3.5" fill="none" stroke="#1a9fe0" stroke-width="2"/></svg>
<svg style="position:absolute;left:408px;top:1604px;" width="24" height="26" viewBox="0 0 24 26"><path d="M2 18 L8 6 H22 L16 18 Z" fill="#1040a0" stroke="#ddd"/></svg>
<svg style="position:absolute;left:434px;top:1604px;" width="24" height="26" viewBox="0 0 24 26"><rect x="0.5" y="0.5" width="23" height="25" fill="#555" stroke="#1a1a1a"/><path d="M5 14 V19 H19 V14 M9.5 16 V19 M14 16 V19" stroke="#eee" fill="none" stroke-width="1.5"/></svg>
<svg style="position:absolute;left:457px;top:1604px;" width="24" height="26" viewBox="0 0 24 26"><path d="M4 18 Q10 12 18 6" stroke="#999" stroke-width="2" fill="none"/></svg>
<svg style="position:absolute;left:482px;top:1604px;" width="24" height="26" viewBox="0 0 24 26"><path d="M4 18 Q12 16 18 6" stroke="#20c0c0" stroke-width="2.2" fill="none"/></svg>
<svg style="position:absolute;left:510px;top:1604px;" width="24" height="26" viewBox="0 0 24 26"><rect x="4" y="4" width="16" height="16" fill="#777"/><path d="M3 3 L21 21 M21 3 L3 21" stroke="#e00" stroke-width="3"/></svg>
<div style="position:absolute;left:536px;top:1604px;width:647px;height:25px;background:#222222;"></div>
<svg style="position:absolute;left:539px;top:1610px;" width="10" height="14" viewBox="0 0 10 14"><path d="M9 0 L1 7 L9 14 Z" fill="#ddd"/></svg>
<svg style="position:absolute;left:1169px;top:1610px;" width="10" height="14" viewBox="0 0 10 14"><path d="M1 0 L9 7 L1 14 Z" fill="#ddd"/></svg>
<div style="position:absolute;left:795px;top:1608px;width:134px;height:17px;background:#7f9fe0;"></div>
<div style="position:absolute;left:1207px;top:897px;width:261px;height:747px;background:#333333;"></div>
<div style="position:absolute;left:1221px;top:911px;width:247px;height:691px;background:#000000;"></div>
<svg style="position:absolute;left:1221px;top:911px;" width="247" height="691" viewBox="0 0 247 691"><defs><filter id="n5" x="0" y="0" width="100%" height="100%" color-interpolation-filters="sRGB"><feTurbulence type="fractalNoise" baseFrequency="0.5" numOctaves="3" seed="9"/><feColorMatrix type="matrix" values="1 0 0 0 0  1 0 0 0 0  1 0 0 0 0  0 0 0 0 1"/><feComponentTransfer><feFuncR type="linear" slope="1.5" intercept="-0.25"/><feFuncG type="linear" slope="1.5" intercept="-0.25"/><feFuncB type="linear" slope="1.5" intercept="-0.25"/></feComponentTransfer></filter><clipPath id="obj"><polygon points="0,390 247,337 247,620 0,600"/></clipPath></defs><polygon points="0,390 247,337 247,620 0,600" fill="#363636"/><g clip-path="url(#obj)"><rect width="247" height="691" filter="url(#n5)" opacity="0.12" style="mix-blend-mode:overlay"/><circle cx="115" cy="500" r="12" fill="none" stroke="#262626" stroke-width="1.2" opacity="0.35"/><circle cx="115" cy="500" r="21" fill="none" stroke="#262626" stroke-width="1.2" opacity="0.35"/><circle cx="115" cy="500" r="30" fill="none" stroke="#262626" stroke-width="1.2" opacity="0.35"/><circle cx="115" cy="500" r="39" fill="none" stroke="#262626" stroke-width="1.2" opacity="0.35"/><circle cx="115" cy="500" r="48" fill="none" stroke="#262626" stroke-width="1.2" opacity="0.35"/><circle cx="115" cy="500" r="57" fill="none" stroke="#262626" stroke-width="1.2" opacity="0.35"/><circle cx="115" cy="500" r="66" fill="none" stroke="#262626" stroke-width="1.2" opacity="0.35"/><circle cx="115" cy="500" r="75" fill="none" stroke="#262626" stroke-width="1.2" opacity="0.35"/><circle cx="115" cy="500" r="84" fill="none" stroke="#262626" stroke-width="1.2" opacity="0.35"/><circle cx="115" cy="500" r="93" fill="none" stroke="#262626" stroke-width="1.2" opacity="0.35"/><circle cx="115" cy="500" r="102" fill="none" stroke="#262626" stroke-width="1.2" opacity="0.35"/><circle cx="115" cy="500" r="111" fill="none" stroke="#262626" stroke-width="1.2" opacity="0.35"/><circle cx="115" cy="500" r="120" fill="none" stroke="#262626" stroke-width="1.2" opacity="0.35"/><circle cx="115" cy="500" r="129" fill="none" stroke="#262626" stroke-width="1.2" opacity="0.35"/><circle cx="115" cy="500" r="138" fill="none" stroke="#262626" stroke-width="1.2" opacity="0.35"/><circle cx="115" cy="500" r="147" fill="none" stroke="#262626" stroke-width="1.2" opacity="0.35"/><circle cx="115" cy="500" r="156" fill="none" stroke="#262626" stroke-width="1.2" opacity="0.35"/><circle cx="115" cy="500" r="165" fill="none" stroke="#262626" stroke-width="1.2" opacity="0.35"/><circle cx="115" cy="500" r="174" fill="none" stroke="#262626" stroke-width="1.2" opacity="0.35"/><circle cx="115" cy="500" r="183" fill="none" stroke="#262626" stroke-width="1.2" opacity="0.35"/><circle cx="115" cy="500" r="192" fill="none" stroke="#262626" stroke-width="1.2" opacity="0.35"/><circle cx="330" cy="480" r="200" fill="#000" opacity="0.08"/></g><path d="M145 140 L247 474 M140 123 L247 113" stroke="#b0a010" stroke-width="1.3" fill="none"/><g clip-path="url(#obj)"><ellipse cx="65" cy="505" rx="3.7" ry="2.2" transform="rotate(-10 65 505)" fill="#20a8b8"/><ellipse cx="130" cy="522" rx="4.4" ry="2.1" transform="rotate(-58 130 522)" fill="#20b0c0"/><ellipse cx="168" cy="574" rx="4.2" ry="3.4" transform="rotate(42 168 574)" fill="#20a0c0"/><ellipse cx="184" cy="472" rx="6.0" ry="2.1" transform="rotate(6 184 472)" fill="#30b8c0"/><ellipse cx="236" cy="512" rx="4.6" ry="2.4" transform="rotate(-38 236 512)" fill="#20a8c0"/><ellipse cx="205" cy="575" rx="5.5" ry="2.4" transform="rotate(60 205 575)" fill="#2a70d0"/><ellipse cx="176" cy="612" rx="5.8" ry="3.2" transform="rotate(43 176 612)" fill="#20a8b0"/><ellipse cx="40" cy="552" rx="3.8" ry="2.4" transform="rotate(-39 40 552)" fill="#20b0a0"/><ellipse cx="178" cy="388" rx="3.9" ry="2.9" transform="rotate(33 178 388)" fill="#30d030"/><ellipse cx="72" cy="568" rx="5.9" ry="3.3" transform="rotate(-13 72 568)" fill="#40d020"/><ellipse cx="152" cy="642" rx="3.3" ry="2.9" transform="rotate(25 152 642)" fill="#50d020"/><ellipse cx="233" cy="536" rx="4.2" ry="2.4" transform="rotate(-29 233 536)" fill="#30d030"/><ellipse cx="196" cy="402" rx="4.4" ry="2.1" transform="rotate(59 196 402)" fill="#40c030"/><ellipse cx="51" cy="570" rx="5.5" ry="3.4" transform="rotate(47 51 570)" fill="#c09020"/><ellipse cx="194" cy="448" rx="3.9" ry="3.4" transform="rotate(13 194 448)" fill="#d08030"/><ellipse cx="186" cy="597" rx="5.1" ry="2.5" transform="rotate(37 186 597)" fill="#d09030"/><ellipse cx="90" cy="640" rx="4.5" ry="2.6" transform="rotate(16 90 640)" fill="#c0a020"/><ellipse cx="230" cy="640" rx="3.9" ry="2.7" transform="rotate(-31 230 640)" fill="#20b0c0"/><ellipse cx="120" cy="470" rx="3.9" ry="3.2" transform="rotate(-55 120 470)" fill="#2a80d0"/></g></svg>
<div style="position:absolute;left:1238px;top:1030.9px;line-height:24px;font-size:20.5px;color:#ffffff;white-space:nowrap;text-shadow:-1.2px 0 #000,1.2px 0 #000,0 -1.2px #000,0 1.2px #000,-1px -1px #000,1px 1px #000,1px -1px #000,-1px 1px #000,-1.2px 0 #000,1.2px 0 #000,0 -1.2px #000,0 1.2px #000;">Volume [mm&sup3;]</div>
<svg style="position:absolute;left:1237px;top:1058px;" width="20" height="428" viewBox="0 0 20 428"><defs><linearGradient id="cb13439" x1="0" y1="0" x2="0" y2="1"><stop offset="0" stop-color="#ff0000"/><stop offset="0.1" stop-color="#f84000"/><stop offset="0.2" stop-color="#e08000"/><stop offset="0.3" stop-color="#a8c800"/><stop offset="0.4" stop-color="#40f000"/><stop offset="0.5" stop-color="#00ff00"/><stop offset="0.6" stop-color="#00e070"/><stop offset="0.7" stop-color="#00c8b0"/><stop offset="0.8" stop-color="#0098d8"/><stop offset="0.9" stop-color="#0050f0"/><stop offset="1" stop-color="#0000ff"/></linearGradient></defs><rect x="0" y="0" width="19" height="427" fill="#000"/><rect x="1" y="1" width="17" height="18" fill="#ff0090"/><rect x="1" y="20" width="17" height="389" fill="url(#cb13439)"/><rect x="1" y="409" width="17" height="17" fill="#a000f0"/></svg>
<div style="position:absolute;left:1263px;top:1064.9px;line-height:24px;font-size:20.5px;color:#ffffff;white-space:nowrap;text-shadow:-1.2px 0 #000,1.2px 0 #000,0 -1.2px #000,0 1.2px #000,-1px -1px #000,1px 1px #000,1px -1px #000,-1px 1px #000,-1.2px 0 #000,1.2px 0 #000,0 -1.2px #000,0 1.2px #000;">0.006</div>
<div style="position:absolute;left:1263px;top:1103.9px;line-height:24px;font-size:20.5px;color:#ffffff;white-space:nowrap;text-shadow:-1.2px 0 #000,1.2px 0 #000,0 -1.2px #000,0 1.2px #000,-1px -1px #000,1px 1px #000,1px -1px #000,-1px 1px #000,-1.2px 0 #000,1.2px 0 #000,0 -1.2px #000,0 1.2px #000;">0.006</div>
<div style="position:absolute;left:1263px;top:1142.8px;line-height:24px;font-size:20.5px;color:#ffffff;white-space:nowrap;text-shadow:-1.2px 0 #000,1.2px 0 #000,0 -1.2px #000,0 1.2px #000,-1px -1px #000,1px 1px #000,1px -1px #000,-1px 1px #000,-1.2px 0 #000,1.2px 0 #000,0 -1.2px #000,0 1.2px #000;">0.005</div>
<div style="position:absolute;left:1263px;top:1181.8px;line-height:24px;font-size:20.5px;color:#ffffff;white-space:nowrap;text-shadow:-1.2px 0 #000,1.2px 0 #000,0 -1.2px #000,0 1.2px #000,-1px -1px #000,1px 1px #000,1px -1px #000,-1px 1px #000,-1.2px 0 #000,1.2px 0 #000,0 -1.2px #000,0 1.2px #000;">0.005</div>
<div style="position:absolute;left:1263px;top:1220.7px;line-height:24px;font-size:20.5px;color:#ffffff;white-space:nowrap;text-shadow:-1.2px 0 #000,1.2px 0 #000,0 -1.2px #000,0 1.2px #000,-1px -1px #000,1px 1px #000,1px -1px #000,-1px 1px #000,-1.2px 0 #000,1.2px 0 #000,0 -1.2px #000,0 1.2px #000;">0.004</div>
<div style="position:absolute;left:1263px;top:1259.7px;line-height:24px;font-size:20.5px;color:#ffffff;white-space:nowrap;text-shadow:-1.2px 0 #000,1.2px 0 #000,0 -1.2px #000,0 1.2px #000,-1px -1px #000,1px 1px #000,1px -1px #000,-1px 1px #000,-1.2px 0 #000,1.2px 0 #000,0 -1.2px #000,0 1.2px #000;">0.003</div>
<div style="position:absolute;left:1263px;top:1298.7px;line-height:24px;font-size:20.5px;color:#ffffff;white-space:nowrap;text-shadow:-1.2px 0 #000,1.2px 0 #000,0 -1.2px #000,0 1.2px #000,-1px -1px #000,1px 1px #000,1px -1px #000,-1px 1px #000,-1.2px 0 #000,1.2px 0 #000,0 -1.2px #000,0 1.2px #000;">0.003</div>
<div style="position:absolute;left:1263px;top:1337.6px;line-height:24px;font-size:20.5px;color:#ffffff;white-space:nowrap;text-shadow:-1.2px 0 #000,1.2px 0 #000,0 -1.2px #000,0 1.2px #000,-1px -1px #000,1px 1px #000,1px -1px #000,-1px 1px #000,-1.2px 0 #000,1.2px 0 #000,0 -1.2px #000,0 1.2px #000;">0.002</div>
<div style="position:absolute;left:1263px;top:1376.6px;line-height:24px;font-size:20.5px;color:#ffffff;white-space:nowrap;text-shadow:-1.2px 0 #000,1.2px 0 #000,0 -1.2px #000,0 1.2px #000,-1px -1px #000,1px 1px #000,1px -1px #000,-1px 1px #000,-1.2px 0 #000,1.2px 0 #000,0 -1.2px #000,0 1.2px #000;">0.002</div>
<div style="position:absolute;left:1263px;top:1415.5px;line-height:24px;font-size:20.5px;color:#ffffff;white-space:nowrap;text-shadow:-1.2px 0 #000,1.2px 0 #000,0 -1.2px #000,0 1.2px #000,-1px -1px #000,1px 1px #000,1px -1px #000,-1px 1px #000,-1.2px 0 #000,1.2px 0 #000,0 -1.2px #000,0 1.2px #000;">0.001</div>
<div style="position:absolute;left:1263px;top:1454.5px;line-height:24px;font-size:20.5px;color:#ffffff;white-space:nowrap;text-shadow:-1.2px 0 #000,1.2px 0 #000,0 -1.2px #000,0 1.2px #000,-1px -1px #000,1px 1px #000,1px -1px #000,-1px 1px #000,-1.2px 0 #000,1.2px 0 #000,0 -1.2px #000,0 1.2px #000;">0.001</div>
<div style="position:absolute;left:1447px;top:1002.4px;line-height:22px;font-size:19px;color:#d8d8d8;white-space:nowrap;transform:rotate(8deg);">D</div>
<div style="position:absolute;left:20px;top:1644px;width:1448px;height:44px;background:#333333;"></div>
<div style="position:absolute;left:20px;top:1647px;width:3054px;height:2px;background:#5c5c54;"></div>
<div style="position:absolute;left:1166px;top:1637px;width:98px;height:6px;background:#7f9fe0;"></div>
<div style="position:absolute;left:1165px;top:1636px;width:100px;height:1px;background:#222;"></div>
<div style="position:absolute;left:22px;top:1648px;width:2px;height:37px;background:#6e6a60;"></div>
<div style="position:absolute;left:20px;top:1685px;width:3054px;height:2px;background:#ffffff;"></div>
<div style="position:absolute;left:20px;top:1687px;width:3054px;height:2px;background:#1e1e1e;"></div>
<div style="position:absolute;left:1462px;top:60px;width:1505px;height:1631px;box-shadow:0 -4px 16px rgba(0,0,0,0.16);"></div>
<div style="position:absolute;left:1468px;top:63px;width:1493px;height:1625px;background:#333333;border:1px solid #555;border-top-color:#8a8a8a;box-sizing:border-box;"></div>
<div style="position:absolute;left:1469px;top:64px;width:1491px;height:48px;background:#ffffff;"></div>
<svg style="position:absolute;left:1481px;top:74px;" width="26" height="26" viewBox="0 0 26 26"><rect x="0" y="0" width="26" height="26" rx="3.12" fill="#26337a"/><g stroke="#fff" stroke-width="2.704" fill="none" stroke-linejoin="miter"><path d="M5.2 8.32 V16.64 L13.0 22.880000000000003 L21.32 16.64 V8.84"/><path d="M5.2 9.36 L13.0 15.600000000000001 L21.32 9.36"/><path d="M9.36 9.36 L14.56 5.2"/></g></svg>
<div style="position:absolute;left:1515px;top:78.5px;line-height:22px;font-size:18.8px;color:#000000;white-space:nowrap;">Properties of Porosity/inclusion analysis (VGDefX/Only threshold): Analysis 1&nbsp; [2] of Region 3_ of Volume 1</div>
<svg style="position:absolute;left:2765px;top:78px;" width="190" height="24" viewBox="0 0 190 24"><line x1="5" y1="10" x2="22" y2="10" stroke="#c8c8c8" stroke-width="1.3"/><rect x="78.5" y="2.5" width="15" height="15" fill="none" stroke="#000" stroke-width="1.6"/><path d="M151 1 L168 18 M168 1 L151 18" stroke="#000" stroke-width="1.6"/></svg>
<div style="position:absolute;left:1469px;top:112px;width:1491px;height:43px;background:#333333;"></div>
<div style="position:absolute;left:1472px;top:152px;width:1432px;height:2px;background:#1e1e1e;"></div>
<div style="position:absolute;left:1474px;top:120px;width:94px;height:32px;background:#2e2e2e;border:1px solid #1e1e1e;box-sizing:border-box;"></div>
<div style="position:absolute;left:1474.0px;top:128.1px;width:94px;line-height:20px;font-size:17px;color:#d4d4d4;white-space:nowrap;text-align:center;">Settings</div>
<div style="position:absolute;left:1568px;top:120px;width:81px;height:32px;background:#2e2e2e;border:1px solid #1e1e1e;box-sizing:border-box;"></div>
<div style="position:absolute;left:1568.0px;top:128.1px;width:81px;line-height:20px;font-size:17px;color:#d4d4d4;white-space:nowrap;text-align:center;">Colors</div>
<div style="position:absolute;left:1649px;top:120px;width:92px;height:32px;background:#2e2e2e;border:1px solid #1e1e1e;box-sizing:border-box;"></div>
<div style="position:absolute;left:1649.0px;top:128.1px;width:92px;line-height:20px;font-size:17px;color:#d4d4d4;white-space:nowrap;text-align:center;">Defects</div>
<div style="position:absolute;left:1741px;top:116px;width:102px;height:37px;background:#262626;border:1px solid #1c1c1c;border-bottom:none;box-sizing:border-box;"></div>
<div style="position:absolute;left:1741.0px;top:129.1px;width:102px;line-height:20px;font-size:17px;color:#ffffff;white-space:nowrap;text-align:center;">Statistics</div>
<div style="position:absolute;left:1843px;top:120px;width:127px;height:32px;background:#2e2e2e;border:1px solid #1e1e1e;box-sizing:border-box;"></div>
<div style="position:absolute;left:1843.0px;top:128.1px;width:127px;line-height:20px;font-size:17px;color:#d4d4d4;white-space:nowrap;text-align:center;">Feature plot</div>
<div style="position:absolute;left:1970px;top:120px;width:191px;height:32px;background:#2e2e2e;border:1px solid #1e1e1e;box-sizing:border-box;"></div>
<div style="position:absolute;left:1970.0px;top:128.1px;width:191px;line-height:20px;font-size:17px;color:#6a6a6a;white-space:nowrap;text-align:center;">Directional variability</div>
<div style="position:absolute;left:2161px;top:120px;width:145px;height:32px;background:#2e2e2e;border:1px solid #1e1e1e;box-sizing:border-box;"></div>
<div style="position:absolute;left:2161.0px;top:128.1px;width:145px;line-height:20px;font-size:17px;color:#d4d4d4;white-space:nowrap;text-align:center;">Porosity colors</div>
<div style="position:absolute;left:2306px;top:120px;width:167px;height:32px;background:#2e2e2e;border:1px solid #1e1e1e;box-sizing:border-box;"></div>
<div style="position:absolute;left:2306.0px;top:128.1px;width:167px;line-height:20px;font-size:17px;color:#6a6a6a;white-space:nowrap;text-align:center;">Porosity statistics</div>
<div style="position:absolute;left:2473px;top:120px;width:194px;height:32px;background:#2e2e2e;border:1px solid #1e1e1e;box-sizing:border-box;"></div>
<div style="position:absolute;left:2473.0px;top:128.1px;width:194px;line-height:20px;font-size:17px;color:#6a6a6a;white-space:nowrap;text-align:center;">Hot spots of porosity</div>
<div style="position:absolute;left:2667px;top:120px;width:110px;height:32px;background:#2e2e2e;border:1px solid #1e1e1e;box-sizing:border-box;"></div>
<div style="position:absolute;left:2667.0px;top:128.1px;width:110px;line-height:20px;font-size:17px;color:#6a6a6a;white-space:nowrap;text-align:center;">Mesh cells</div>
<div style="position:absolute;left:2777px;top:120px;width:127px;height:32px;background:#2e2e2e;border:1px solid #1e1e1e;box-sizing:border-box;"></div>
<div style="position:absolute;left:2777.0px;top:128.1px;width:127px;line-height:20px;font-size:17px;color:#d4d4d4;white-space:nowrap;text-align:center;">Annotations</div>
<svg style="position:absolute;left:2912px;top:123px;" width="12" height="18" viewBox="0 0 12 18"><path d="M11 1 L2 9 L11 17 Z" fill="#8a8a8a"/></svg>
<svg style="position:absolute;left:2937px;top:123px;" width="12" height="18" viewBox="0 0 12 18"><path d="M1 1 L10 9 L1 17 Z" fill="#ffffff"/></svg>
<div style="position:absolute;left:1472px;top:155px;width:1485px;height:1444px;background:#333333;border:2px solid #1e1e1e;box-sizing:border-box;"></div>
<svg style="position:absolute;left:1474px;top:157px;" width="1481" height="1440" viewBox="0 0 1481 1440"><line x1="87.4" y1="25" x2="87.4" y2="1121" stroke="#8a8a8a" stroke-width="1.2" stroke-dasharray="1.5 3.3"/><line x1="111.8" y1="25" x2="111.8" y2="1121" stroke="#b4b4b4" stroke-width="1.5" stroke-dasharray="1.5 3.3"/><line x1="136.2" y1="25" x2="136.2" y2="1121" stroke="#8a8a8a" stroke-width="1.2" stroke-dasharray="1.5 3.3"/><line x1="160.5" y1="25" x2="160.5" y2="1121" stroke="#8a8a8a" stroke-width="1.2" stroke-dasharray="1.5 3.3"/><line x1="184.9" y1="25" x2="184.9" y2="1121" stroke="#8a8a8a" stroke-width="1.2" stroke-dasharray="1.5 3.3"/><line x1="209.2" y1="25" x2="209.2" y2="1121" stroke="#8a8a8a" stroke-width="1.2" stroke-dasharray="1.5 3.3"/><line x1="233.6" y1="25" x2="233.6" y2="1121" stroke="#8a8a8a" stroke-width="1.2" stroke-dasharray="1.5 3.3"/><line x1="258.0" y1="25" x2="258.0" y2="1121" stroke="#8a8a8a" stroke-width="1.2" stroke-dasharray="1.5 3.3"/><line x1="282.3" y1="25" x2="282.3" y2="1121" stroke="#8a8a8a" stroke-width="1.2" stroke-dasharray="1.5 3.3"/><line x1="306.7" y1="25" x2="306.7" y2="1121" stroke="#8a8a8a" stroke-width="1.2" stroke-dasharray="1.5 3.3"/><line x1="331.0" y1="25" x2="331.0" y2="1121" stroke="#8a8a8a" stroke-width="1.2" stroke-dasharray="1.5 3.3"/><line x1="355.4" y1="25" x2="355.4" y2="1121" stroke="#b4b4b4" stroke-width="1.5" stroke-dasharray="1.5 3.3"/><line x1="379.8" y1="25" x2="379.8" y2="1121" stroke="#8a8a8a" stroke-width="1.2" stroke-dasharray="1.5 3.3"/><line x1="404.1" y1="25" x2="404.1" y2="1121" stroke="#8a8a8a" stroke-width="1.2" stroke-dasharray="1.5 3.3"/><line x1="428.5" y1="25" x2="428.5" y2="1121" stroke="#8a8a8a" stroke-width="1.2" stroke-dasharray="1.5 3.3"/><line x1="452.8" y1="25" x2="452.8" y2="1121" stroke="#8a8a8a" stroke-width="1.2" stroke-dasharray="1.5 3.3"/><line x1="477.2" y1="25" x2="477.2" y2="1121" stroke="#8a8a8a" stroke-width="1.2" stroke-dasharray="1.5 3.3"/><line x1="501.6" y1="25" x2="501.6" y2="1121" stroke="#8a8a8a" stroke-width="1.2" stroke-dasharray="1.5 3.3"/><line x1="525.9" y1="25" x2="525.9" y2="1121" stroke="#8a8a8a" stroke-width="1.2" stroke-dasharray="1.5 3.3"/><line x1="550.3" y1="25" x2="550.3" y2="1121" stroke="#8a8a8a" stroke-width="1.2" stroke-dasharray="1.5 3.3"/><line x1="574.6" y1="25" x2="574.6" y2="1121" stroke="#8a8a8a" stroke-width="1.2" stroke-dasharray="1.5 3.3"/><line x1="599.0" y1="25" x2="599.0" y2="1121" stroke="#b4b4b4" stroke-width="1.5" stroke-dasharray="1.5 3.3"/><line x1="623.4" y1="25" x2="623.4" y2="1121" stroke="#8a8a8a" stroke-width="1.2" stroke-dasharray="1.5 3.3"/><line x1="647.7" y1="25" x2="647.7" y2="1121" stroke="#8a8a8a" stroke-width="1.2" stroke-dasharray="1.5 3.3"/><line x1="672.1" y1="25" x2="672.1" y2="1121" stroke="#8a8a8a" stroke-width="1.2" stroke-dasharray="1.5 3.3"/><line x1="696.4" y1="25" x2="696.4" y2="1121" stroke="#8a8a8a" stroke-width="1.2" stroke-dasharray="1.5 3.3"/><line x1="720.8" y1="25" x2="720.8" y2="1121" stroke="#8a8a8a" stroke-width="1.2" stroke-dasharray="1.5 3.3"/><line x1="745.2" y1="25" x2="745.2" y2="1121" stroke="#8a8a8a" stroke-width="1.2" stroke-dasharray="1.5 3.3"/><line x1="769.5" y1="25" x2="769.5" y2="1121" stroke="#8a8a8a" stroke-width="1.2" stroke-dasharray="1.5 3.3"/><line x1="793.9" y1="25" x2="793.9" y2="1121" stroke="#8a8a8a" stroke-width="1.2" stroke-dasharray="1.5 3.3"/><line x1="818.2" y1="25" x2="818.2" y2="1121" stroke="#8a8a8a" stroke-width="1.2" stroke-dasharray="1.5 3.3"/><line x1="842.6" y1="25" x2="842.6" y2="1121" stroke="#b4b4b4" stroke-width="1.5" stroke-dasharray="1.5 3.3"/><line x1="867.0" y1="25" x2="867.0" y2="1121" stroke="#8a8a8a" stroke-width="1.2" stroke-dasharray="1.5 3.3"/><line x1="891.3" y1="25" x2="891.3" y2="1121" stroke="#8a8a8a" stroke-width="1.2" stroke-dasharray="1.5 3.3"/><line x1="915.7" y1="25" x2="915.7" y2="1121" stroke="#8a8a8a" stroke-width="1.2" stroke-dasharray="1.5 3.3"/><line x1="940.0" y1="25" x2="940.0" y2="1121" stroke="#8a8a8a" stroke-width="1.2" stroke-dasharray="1.5 3.3"/><line x1="964.4" y1="25" x2="964.4" y2="1121" stroke="#8a8a8a" stroke-width="1.2" stroke-dasharray="1.5 3.3"/><line x1="988.8" y1="25" x2="988.8" y2="1121" stroke="#8a8a8a" stroke-width="1.2" stroke-dasharray="1.5 3.3"/><line x1="1013.1" y1="25" x2="1013.1" y2="1121" stroke="#8a8a8a" stroke-width="1.2" stroke-dasharray="1.5 3.3"/><line x1="1037.5" y1="25" x2="1037.5" y2="1121" stroke="#8a8a8a" stroke-width="1.2" stroke-dasharray="1.5 3.3"/><line x1="1061.8" y1="25" x2="1061.8" y2="1121" stroke="#8a8a8a" stroke-width="1.2" stroke-dasharray="1.5 3.3"/><line x1="1086.2" y1="25" x2="1086.2" y2="1121" stroke="#b4b4b4" stroke-width="1.5" stroke-dasharray="1.5 3.3"/><line x1="1110.6" y1="25" x2="1110.6" y2="1121" stroke="#8a8a8a" stroke-width="1.2" stroke-dasharray="1.5 3.3"/><line x1="1134.9" y1="25" x2="1134.9" y2="1121" stroke="#8a8a8a" stroke-width="1.2" stroke-dasharray="1.5 3.3"/><line x1="1159.3" y1="25" x2="1159.3" y2="1121" stroke="#8a8a8a" stroke-width="1.2" stroke-dasharray="1.5 3.3"/><line x1="1183.6" y1="25" x2="1183.6" y2="1121" stroke="#8a8a8a" stroke-width="1.2" stroke-dasharray="1.5 3.3"/><line x1="1208.0" y1="25" x2="1208.0" y2="1121" stroke="#8a8a8a" stroke-width="1.2" stroke-dasharray="1.5 3.3"/><line x1="1232.4" y1="25" x2="1232.4" y2="1121" stroke="#8a8a8a" stroke-width="1.2" stroke-dasharray="1.5 3.3"/><line x1="1256.7" y1="25" x2="1256.7" y2="1121" stroke="#8a8a8a" stroke-width="1.2" stroke-dasharray="1.5 3.3"/><line x1="1281.1" y1="25" x2="1281.1" y2="1121" stroke="#8a8a8a" stroke-width="1.2" stroke-dasharray="1.5 3.3"/><line x1="1305.4" y1="25" x2="1305.4" y2="1121" stroke="#8a8a8a" stroke-width="1.2" stroke-dasharray="1.5 3.3"/><line x1="1329.8" y1="25" x2="1329.8" y2="1121" stroke="#b4b4b4" stroke-width="1.5" stroke-dasharray="1.5 3.3"/><line x1="1354.2" y1="25" x2="1354.2" y2="1121" stroke="#8a8a8a" stroke-width="1.2" stroke-dasharray="1.5 3.3"/><line x1="1378.5" y1="25" x2="1378.5" y2="1121" stroke="#8a8a8a" stroke-width="1.2" stroke-dasharray="1.5 3.3"/><line x1="1402.9" y1="25" x2="1402.9" y2="1121" stroke="#8a8a8a" stroke-width="1.2" stroke-dasharray="1.5 3.3"/><line x1="1427.2" y1="25" x2="1427.2" y2="1121" stroke="#8a8a8a" stroke-width="1.2" stroke-dasharray="1.5 3.3"/><line x1="76" y1="1086.3" x2="1444" y2="1086.3" stroke="#8a8a8a" stroke-width="1.2" stroke-dasharray="1.5 3.3"/><line x1="76" y1="1051.6" x2="1444" y2="1051.6" stroke="#8a8a8a" stroke-width="1.2" stroke-dasharray="1.5 3.3"/><line x1="76" y1="1016.9" x2="1444" y2="1016.9" stroke="#8a8a8a" stroke-width="1.2" stroke-dasharray="1.5 3.3"/><line x1="76" y1="982.2" x2="1444" y2="982.2" stroke="#8a8a8a" stroke-width="1.2" stroke-dasharray="1.5 3.3"/><line x1="76" y1="947.5" x2="1444" y2="947.5" stroke="#b0b0b0" stroke-width="1.5" stroke-dasharray="1.5 3.3"/><line x1="76" y1="912.8" x2="1444" y2="912.8" stroke="#8a8a8a" stroke-width="1.2" stroke-dasharray="1.5 3.3"/><line x1="76" y1="878.1" x2="1444" y2="878.1" stroke="#8a8a8a" stroke-width="1.2" stroke-dasharray="1.5 3.3"/><line x1="76" y1="843.4" x2="1444" y2="843.4" stroke="#8a8a8a" stroke-width="1.2" stroke-dasharray="1.5 3.3"/><line x1="76" y1="808.7" x2="1444" y2="808.7" stroke="#8a8a8a" stroke-width="1.2" stroke-dasharray="1.5 3.3"/><line x1="76" y1="774.0" x2="1444" y2="774.0" stroke="#b0b0b0" stroke-width="1.5" stroke-dasharray="1.5 3.3"/><line x1="76" y1="739.3" x2="1444" y2="739.3" stroke="#8a8a8a" stroke-width="1.2" stroke-dasharray="1.5 3.3"/><line x1="76" y1="704.6" x2="1444" y2="704.6" stroke="#8a8a8a" stroke-width="1.2" stroke-dasharray="1.5 3.3"/><line x1="76" y1="669.9" x2="1444" y2="669.9" stroke="#8a8a8a" stroke-width="1.2" stroke-dasharray="1.5 3.3"/><line x1="76" y1="635.2" x2="1444" y2="635.2" stroke="#8a8a8a" stroke-width="1.2" stroke-dasharray="1.5 3.3"/><line x1="76" y1="600.5" x2="1444" y2="600.5" stroke="#b0b0b0" stroke-width="1.5" stroke-dasharray="1.5 3.3"/><line x1="76" y1="565.8" x2="1444" y2="565.8" stroke="#8a8a8a" stroke-width="1.2" stroke-dasharray="1.5 3.3"/><line x1="76" y1="531.1" x2="1444" y2="531.1" stroke="#8a8a8a" stroke-width="1.2" stroke-dasharray="1.5 3.3"/><line x1="76" y1="496.4" x2="1444" y2="496.4" stroke="#8a8a8a" stroke-width="1.2" stroke-dasharray="1.5 3.3"/><line x1="76" y1="461.7" x2="1444" y2="461.7" stroke="#8a8a8a" stroke-width="1.2" stroke-dasharray="1.5 3.3"/><line x1="76" y1="427.0" x2="1444" y2="427.0" stroke="#b0b0b0" stroke-width="1.5" stroke-dasharray="1.5 3.3"/><line x1="76" y1="392.3" x2="1444" y2="392.3" stroke="#8a8a8a" stroke-width="1.2" stroke-dasharray="1.5 3.3"/><line x1="76" y1="357.6" x2="1444" y2="357.6" stroke="#8a8a8a" stroke-width="1.2" stroke-dasharray="1.5 3.3"/><line x1="76" y1="322.9" x2="1444" y2="322.9" stroke="#8a8a8a" stroke-width="1.2" stroke-dasharray="1.5 3.3"/><line x1="76" y1="288.2" x2="1444" y2="288.2" stroke="#8a8a8a" stroke-width="1.2" stroke-dasharray="1.5 3.3"/><line x1="76" y1="253.5" x2="1444" y2="253.5" stroke="#b0b0b0" stroke-width="1.5" stroke-dasharray="1.5 3.3"/><line x1="76" y1="218.8" x2="1444" y2="218.8" stroke="#8a8a8a" stroke-width="1.2" stroke-dasharray="1.5 3.3"/><line x1="76" y1="184.1" x2="1444" y2="184.1" stroke="#8a8a8a" stroke-width="1.2" stroke-dasharray="1.5 3.3"/><line x1="76" y1="149.4" x2="1444" y2="149.4" stroke="#8a8a8a" stroke-width="1.2" stroke-dasharray="1.5 3.3"/><line x1="76" y1="114.7" x2="1444" y2="114.7" stroke="#8a8a8a" stroke-width="1.2" stroke-dasharray="1.5 3.3"/><line x1="76" y1="80.0" x2="1444" y2="80.0" stroke="#b0b0b0" stroke-width="1.5" stroke-dasharray="1.5 3.3"/><line x1="76" y1="45.3" x2="1444" y2="45.3" stroke="#8a8a8a" stroke-width="1.2" stroke-dasharray="1.5 3.3"/><line x1="72" y1="25" x2="72" y2="1122" stroke="#e0e0e0" stroke-width="2"/><line x1="72" y1="1122" x2="1444" y2="1122" stroke="#e0e0e0" stroke-width="2"/><line x1="62" y1="1121.0" x2="72" y2="1121.0" stroke="#e0e0e0" stroke-width="2"/><line x1="67" y1="1086.3" x2="72" y2="1086.3" stroke="#e0e0e0" stroke-width="2"/><line x1="67" y1="1051.6" x2="72" y2="1051.6" stroke="#e0e0e0" stroke-width="2"/><line x1="67" y1="1016.9" x2="72" y2="1016.9" stroke="#e0e0e0" stroke-width="2"/><line x1="67" y1="982.2" x2="72" y2="982.2" stroke="#e0e0e0" stroke-width="2"/><line x1="62" y1="947.5" x2="72" y2="947.5" stroke="#e0e0e0" stroke-width="2"/><line x1="67" y1="912.8" x2="72" y2="912.8" stroke="#e0e0e0" stroke-width="2"/><line x1="67" y1="878.1" x2="72" y2="878.1" stroke="#e0e0e0" stroke-width="2"/><line x1="67" y1="843.4" x2="72" y2="843.4" stroke="#e0e0e0" stroke-width="2"/><line x1="67" y1="808.7" x2="72" y2="808.7" stroke="#e0e0e0" stroke-width="2"/><line x1="62" y1="774.0" x2="72" y2="774.0" stroke="#e0e0e0" stroke-width="2"/><line x1="67" y1="739.3" x2="72" y2="739.3" stroke="#e0e0e0" stroke-width="2"/><line x1="67" y1="704.6" x2="72" y2="704.6" stroke="#e0e0e0" stroke-width="2"/><line x1="67" y1="669.9" x2="72" y2="669.9" stroke="#e0e0e0" stroke-width="2"/><line x1="67" y1="635.2" x2="72" y2="635.2" stroke="#e0e0e0" stroke-width="2"/><line x1="62" y1="600.5" x2="72" y2="600.5" stroke="#e0e0e0" stroke-width="2"/><line x1="67" y1="565.8" x2="72" y2="565.8" stroke="#e0e0e0" stroke-width="2"/><line x1="67" y1="531.1" x2="72" y2="531.1" stroke="#e0e0e0" stroke-width="2"/><line x1="67" y1="496.4" x2="72" y2="496.4" stroke="#e0e0e0" stroke-width="2"/><line x1="67" y1="461.7" x2="72" y2="461.7" stroke="#e0e0e0" stroke-width="2"/><line x1="62" y1="427.0" x2="72" y2="427.0" stroke="#e0e0e0" stroke-width="2"/><line x1="67" y1="392.3" x2="72" y2="392.3" stroke="#e0e0e0" stroke-width="2"/><line x1="67" y1="357.6" x2="72" y2="357.6" stroke="#e0e0e0" stroke-width="2"/><line x1="67" y1="322.9" x2="72" y2="322.9" stroke="#e0e0e0" stroke-width="2"/><line x1="67" y1="288.2" x2="72" y2="288.2" stroke="#e0e0e0" stroke-width="2"/><line x1="62" y1="253.5" x2="72" y2="253.5" stroke="#e0e0e0" stroke-width="2"/><line x1="67" y1="218.8" x2="72" y2="218.8" stroke="#e0e0e0" stroke-width="2"/><line x1="67" y1="184.1" x2="72" y2="184.1" stroke="#e0e0e0" stroke-width="2"/><line x1="67" y1="149.4" x2="72" y2="149.4" stroke="#e0e0e0" stroke-width="2"/><line x1="67" y1="114.7" x2="72" y2="114.7" stroke="#e0e0e0" stroke-width="2"/><line x1="62" y1="80.0" x2="72" y2="80.0" stroke="#e0e0e0" stroke-width="2"/><line x1="67" y1="45.3" x2="72" y2="45.3" stroke="#e0e0e0" stroke-width="2"/><line x1="87.4" y1="1122" x2="87.4" y2="1128" stroke="#e0e0e0" stroke-width="2"/><line x1="111.8" y1="1122" x2="111.8" y2="1133" stroke="#e0e0e0" stroke-width="2"/><line x1="136.2" y1="1122" x2="136.2" y2="1128" stroke="#e0e0e0" stroke-width="2"/><line x1="160.5" y1="1122" x2="160.5" y2="1128" stroke="#e0e0e0" stroke-width="2"/><line x1="184.9" y1="1122" x2="184.9" y2="1128" stroke="#e0e0e0" stroke-width="2"/><line x1="209.2" y1="1122" x2="209.2" y2="1128" stroke="#e0e0e0" stroke-width="2"/><line x1="233.6" y1="1122" x2="233.6" y2="1128" stroke="#e0e0e0" stroke-width="2"/><line x1="258.0" y1="1122" x2="258.0" y2="1128" stroke="#e0e0e0" stroke-width="2"/><line x1="282.3" y1="1122" x2="282.3" y2="1128" stroke="#e0e0e0" stroke-width="2"/><line x1="306.7" y1="1122" x2="306.7" y2="1128" stroke="#e0e0e0" stroke-width="2"/><line x1="331.0" y1="1122" x2="331.0" y2="1128" stroke="#e0e0e0" stroke-width="2"/><line x1="355.4" y1="1122" x2="355.4" y2="1133" stroke="#e0e0e0" stroke-width="2"/><line x1="379.8" y1="1122" x2="379.8" y2="1128" stroke="#e0e0e0" stroke-width="2"/><line x1="404.1" y1="1122" x2="404.1" y2="1128" stroke="#e0e0e0" stroke-width="2"/><line x1="428.5" y1="1122" x2="428.5" y2="1128" stroke="#e0e0e0" stroke-width="2"/><line x1="452.8" y1="1122" x2="452.8" y2="1128" stroke="#e0e0e0" stroke-width="2"/><line x1="477.2" y1="1122" x2="477.2" y2="1128" stroke="#e0e0e0" stroke-width="2"/><line x1="501.6" y1="1122" x2="501.6" y2="1128" stroke="#e0e0e0" stroke-width="2"/><line x1="525.9" y1="1122" x2="525.9" y2="1128" stroke="#e0e0e0" stroke-width="2"/><line x1="550.3" y1="1122" x2="550.3" y2="1128" stroke="#e0e0e0" stroke-width="2"/><line x1="574.6" y1="1122" x2="574.6" y2="1128" stroke="#e0e0e0" stroke-width="2"/><line x1="599.0" y1="1122" x2="599.0" y2="1133" stroke="#e0e0e0" stroke-width="2"/><line x1="623.4" y1="1122" x2="623.4" y2="1128" stroke="#e0e0e0" stroke-width="2"/><line x1="647.7" y1="1122" x2="647.7" y2="1128" stroke="#e0e0e0" stroke-width="2"/><line x1="672.1" y1="1122" x2="672.1" y2="1128" stroke="#e0e0e0" stroke-width="2"/><line x1="696.4" y1="1122" x2="696.4" y2="1128" stroke="#e0e0e0" stroke-width="2"/><line x1="720.8" y1="1122" x2="720.8" y2="1128" stroke="#e0e0e0" stroke-width="2"/><line x1="745.2" y1="1122" x2="745.2" y2="1128" stroke="#e0e0e0" stroke-width="2"/><line x1="769.5" y1="1122" x2="769.5" y2="1128" stroke="#e0e0e0" stroke-width="2"/><line x1="793.9" y1="1122" x2="793.9" y2="1128" stroke="#e0e0e0" stroke-width="2"/><line x1="818.2" y1="1122" x2="818.2" y2="1128" stroke="#e0e0e0" stroke-width="2"/><line x1="842.6" y1="1122" x2="842.6" y2="1133" stroke="#e0e0e0" stroke-width="2"/><line x1="867.0" y1="1122" x2="867.0" y2="1128" stroke="#e0e0e0" stroke-width="2"/><line x1="891.3" y1="1122" x2="891.3" y2="1128" stroke="#e0e0e0" stroke-width="2"/><line x1="915.7" y1="1122" x2="915.7" y2="1128" stroke="#e0e0e0" stroke-width="2"/><line x1="940.0" y1="1122" x2="940.0" y2="1128" stroke="#e0e0e0" stroke-width="2"/><line x1="964.4" y1="1122" x2="964.4" y2="1128" stroke="#e0e0e0" stroke-width="2"/><line x1="988.8" y1="1122" x2="988.8" y2="1128" stroke="#e0e0e0" stroke-width="2"/><line x1="1013.1" y1="1122" x2="1013.1" y2="1128" stroke="#e0e0e0" stroke-width="2"/><line x1="1037.5" y1="1122" x2="1037.5" y2="1128" stroke="#e0e0e0" stroke-width="2"/><line x1="1061.8" y1="1122" x2="1061.8" y2="1128" stroke="#e0e0e0" stroke-width="2"/><line x1="1086.2" y1="1122" x2="1086.2" y2="1133" stroke="#e0e0e0" stroke-width="2"/><line x1="1110.6" y1="1122" x2="1110.6" y2="1128" stroke="#e0e0e0" stroke-width="2"/><line x1="1134.9" y1="1122" x2="1134.9" y2="1128" stroke="#e0e0e0" stroke-width="2"/><line x1="1159.3" y1="1122" x2="1159.3" y2="1128" stroke="#e0e0e0" stroke-width="2"/><line x1="1183.6" y1="1122" x2="1183.6" y2="1128" stroke="#e0e0e0" stroke-width="2"/><line x1="1208.0" y1="1122" x2="1208.0" y2="1128" stroke="#e0e0e0" stroke-width="2"/><line x1="1232.4" y1="1122" x2="1232.4" y2="1128" stroke="#e0e0e0" stroke-width="2"/><line x1="1256.7" y1="1122" x2="1256.7" y2="1128" stroke="#e0e0e0" stroke-width="2"/><line x1="1281.1" y1="1122" x2="1281.1" y2="1128" stroke="#e0e0e0" stroke-width="2"/><line x1="1305.4" y1="1122" x2="1305.4" y2="1128" stroke="#e0e0e0" stroke-width="2"/><line x1="1329.8" y1="1122" x2="1329.8" y2="1133" stroke="#e0e0e0" stroke-width="2"/><line x1="1354.2" y1="1122" x2="1354.2" y2="1128" stroke="#e0e0e0" stroke-width="2"/><line x1="1378.5" y1="1122" x2="1378.5" y2="1128" stroke="#e0e0e0" stroke-width="2"/><line x1="1402.9" y1="1122" x2="1402.9" y2="1128" stroke="#e0e0e0" stroke-width="2"/><line x1="1427.2" y1="1122" x2="1427.2" y2="1128" stroke="#e0e0e0" stroke-width="2"/><defs><linearGradient id="bl" x1="0" x2="1"><stop offset="0" stop-color="#20e0a0"/><stop offset="0.3" stop-color="#10f040"/><stop offset="0.6" stop-color="#60f010"/><stop offset="0.8" stop-color="#c8d010"/><stop offset="1" stop-color="#e88010"/></linearGradient></defs><rect x="73" y="1119" width="1371" height="2" fill="url(#bl)"/><rect x="71.8" y="80.0" width="2.4" height="1041.0" fill="#20d8a0"/><rect x="213.8" y="774.0" width="2.4" height="347.0" fill="#10f070"/><rect x="307.8" y="774.0" width="2.4" height="347.0" fill="#10f060"/><rect x="355.4" y="774.0" width="2.4" height="347.0" fill="#10f050"/><rect x="544.6" y="774.0" width="2.4" height="347.0" fill="#10e810"/><rect x="592.6" y="774.0" width="2.4" height="347.0" fill="#18f010"/><rect x="779.8" y="774.0" width="2.4" height="347.0" fill="#48f010"/><rect x="827.6" y="774.0" width="2.4" height="347.0" fill="#50f010"/><rect x="1158.3" y="774.0" width="2.4" height="347.0" fill="#b0d810"/><rect x="1252.3" y="427.0" width="2.4" height="694.0" fill="#d8c810"/><rect x="1393.6" y="774.0" width="2.4" height="347.0" fill="#e09810"/><rect x="1441.5" y="774.0" width="2.4" height="347.0" fill="#e88a10"/></svg>
<div style="position:absolute;right:1571px;top:1271.1px;line-height:20px;font-size:17px;color:#d8d8d8;white-space:nowrap;text-align:right;">0.0</div>
<div style="position:absolute;right:1571px;top:1097.6px;line-height:20px;font-size:17px;color:#d8d8d8;white-space:nowrap;text-align:right;">0.5</div>
<div style="position:absolute;right:1571px;top:924.1px;line-height:20px;font-size:17px;color:#d8d8d8;white-space:nowrap;text-align:right;">1.0</div>
<div style="position:absolute;right:1571px;top:750.6px;line-height:20px;font-size:17px;color:#d8d8d8;white-space:nowrap;text-align:right;">1.5</div>
<div style="position:absolute;right:1571px;top:577.1px;line-height:20px;font-size:17px;color:#d8d8d8;white-space:nowrap;text-align:right;">2.0</div>
<div style="position:absolute;right:1571px;top:403.6px;line-height:20px;font-size:17px;color:#d8d8d8;white-space:nowrap;text-align:right;">2.5</div>
<div style="position:absolute;right:1571px;top:230.1px;line-height:20px;font-size:17px;color:#d8d8d8;white-space:nowrap;text-align:right;">3.0</div>
<div style="position:absolute;left:1525.8px;top:1292.1px;width:120px;line-height:20px;font-size:17px;color:#d8d8d8;white-space:nowrap;text-align:center;">0.0025</div>
<div style="position:absolute;left:1769.3999999999999px;top:1292.1px;width:120px;line-height:20px;font-size:17px;color:#d8d8d8;white-space:nowrap;text-align:center;">0.0030</div>
<div style="position:absolute;left:2013.0px;top:1292.1px;width:120px;line-height:20px;font-size:17px;color:#d8d8d8;white-space:nowrap;text-align:center;">0.0035</div>
<div style="position:absolute;left:2256.6px;top:1292.1px;width:120px;line-height:20px;font-size:17px;color:#d8d8d8;white-space:nowrap;text-align:center;">0.0040</div>
<div style="position:absolute;left:2500.2px;top:1292.1px;width:120px;line-height:20px;font-size:17px;color:#d8d8d8;white-space:nowrap;text-align:center;">0.0045</div>
<div style="position:absolute;left:2743.8px;top:1292.1px;width:120px;line-height:20px;font-size:17px;color:#d8d8d8;white-space:nowrap;text-align:center;">0.0050</div>
<div style="position:absolute;left:1557px;top:236px;font-size:17px;line-height:20px;color:#d8d8d8;transform:rotate(-90deg);transform-origin:0 0;white-space:nowrap;">Count</div>
<div style="position:absolute;right:235px;top:189.1px;line-height:20px;font-size:17px;color:#e0e0e0;white-space:nowrap;text-align:right;">Defect volume distribution</div>
<div style="position:absolute;right:195px;top:1234.5px;line-height:18px;font-size:16px;color:#e0e0e0;white-space:nowrap;text-align:right;">Volume [mm&sup3;]</div>
<div style="position:absolute;left:2926px;top:162px;width:23px;height:1103px;background:#232323;"></div>
<svg style="position:absolute;left:2931px;top:166px;" width="14" height="10" viewBox="0 0 14 10"><path d="M0 9 L7 2 L14 9 Z" fill="#ddd"/></svg>
<svg style="position:absolute;left:2931px;top:1252px;" width="14" height="10" viewBox="0 0 14 10"><path d="M0 1 L7 8 L14 1 Z" fill="#ddd"/></svg>
<div style="position:absolute;left:2930px;top:181px;width:15px;height:1067px;background:#7f9fe0;"></div>
<svg style="position:absolute;left:2926px;top:1268px;" width="22" height="22" viewBox="0 0 22 22"><circle cx="9" cy="9" r="6.5" fill="none" stroke="#e0e0e0" stroke-width="1.8"/><path d="M13.5 13.5 L20 20" stroke="#e0e0e0" stroke-width="2.6"/><path d="M5.5 9 H12.5 M9 5.5 V12.5" stroke="#e0e0e0" stroke-width="1.8"/></svg>
<svg style="position:absolute;left:2926px;top:1293px;" width="22" height="22" viewBox="0 0 22 22"><circle cx="9" cy="9" r="6.5" fill="none" stroke="#e0e0e0" stroke-width="1.8"/><path d="M13.5 13.5 L20 20" stroke="#e0e0e0" stroke-width="2.6"/><path d="M5.5 9 H12.5" stroke="#e0e0e0" stroke-width="1.8"/></svg>
<div style="position:absolute;left:1479px;top:1317px;width:1396px;height:23px;background:#232323;"></div>
<svg style="position:absolute;left:1482px;top:1322px;" width="10" height="14" viewBox="0 0 10 14"><path d="M9 0 L1 7 L9 14 Z" fill="#ddd"/></svg>
<svg style="position:absolute;left:2863px;top:1322px;" width="10" height="14" viewBox="0 0 10 14"><path d="M1 0 L9 7 L1 14 Z" fill="#ddd"/></svg>
<div style="position:absolute;left:1499px;top:1321px;width:1361px;height:15px;background:#7f9fe0;"></div>
<svg style="position:absolute;left:2877px;top:1318px;" width="22" height="22" viewBox="0 0 22 22"><circle cx="9" cy="9" r="6.5" fill="none" stroke="#e0e0e0" stroke-width="1.8"/><path d="M13.5 13.5 L20 20" stroke="#e0e0e0" stroke-width="2.6"/><path d="M5.5 9 H12.5 M9 5.5 V12.5" stroke="#e0e0e0" stroke-width="1.8"/></svg>
<svg style="position:absolute;left:2902px;top:1318px;" width="22" height="22" viewBox="0 0 22 22"><circle cx="9" cy="9" r="6.5" fill="none" stroke="#e0e0e0" stroke-width="1.8"/><path d="M13.5 13.5 L20 20" stroke="#e0e0e0" stroke-width="2.6"/><path d="M5.5 9 H12.5" stroke="#e0e0e0" stroke-width="1.8"/></svg>
<svg style="position:absolute;left:2926px;top:1318px;" width="22" height="22" viewBox="0 0 22 22"><circle cx="9" cy="9" r="6.5" fill="none" stroke="#e0e0e0" stroke-width="1.8"/><path d="M13.5 13.5 L20 20" stroke="#e0e0e0" stroke-width="2.6"/></svg>
<div style="position:absolute;left:1480px;top:1351px;width:877px;height:95px;background:transparent;border:2px solid #6e6e6e;box-sizing:border-box;"></div>
<div style="position:absolute;left:1487px;top:1358.1px;line-height:20px;font-size:17px;color:#ffffff;white-space:nowrap;font-weight:bold;">Options</div>
<div style="position:absolute;left:2366px;top:1351px;width:584px;height:95px;background:transparent;border:2px solid #6e6e6e;box-sizing:border-box;"></div>
<div style="position:absolute;left:2373px;top:1358.1px;line-height:20px;font-size:17px;color:#ffffff;white-space:nowrap;font-weight:bold;">Intervals</div>
<div style="position:absolute;left:1480px;top:1456px;width:877px;height:136px;background:transparent;border:2px solid #6e6e6e;box-sizing:border-box;"></div>
<div style="position:absolute;left:1487px;top:1463.1px;line-height:20px;font-size:17px;color:#ffffff;white-space:nowrap;font-weight:bold;">Voids/Inclusions</div>
<div style="position:absolute;left:2366px;top:1456px;width:584px;height:136px;background:transparent;border:2px solid #6e6e6e;box-sizing:border-box;"></div>
<div style="position:absolute;left:2373px;top:1463.1px;line-height:20px;font-size:17px;color:#ffffff;white-space:nowrap;font-weight:bold;">Material</div>
<div style="position:absolute;left:1495px;top:1405.1px;line-height:20px;font-size:17px;color:#e0e0e0;white-space:nowrap;">Color</div>
<div style="position:absolute;left:1546px;top:1400px;width:157px;height:28px;background:#5e5e5e;border:1px solid #1a1a1a;box-sizing:border-box;"></div>
<div style="position:absolute;left:1677px;top:1400px;width:1px;height:28px;background:#222;"></div>
<div style="position:absolute;left:1553px;top:1405.1px;line-height:20px;font-size:17px;color:#e8e8e8;white-space:nowrap;">From color bar</div>
<svg style="position:absolute;left:1683px;top:1410px;" width="14" height="9" viewBox="0 0 14 9"><path d="M0 0 H14 L7 7 Z" fill="#e0e0e0"/></svg>
<div style="position:absolute;left:1711px;top:1405.1px;line-height:20px;font-size:17px;color:#e0e0e0;white-space:nowrap;">Ordinate scaling</div>
<div style="position:absolute;left:1844px;top:1400px;width:135px;height:28px;background:#5e5e5e;border:1px solid #1a1a1a;box-sizing:border-box;"></div>
<div style="position:absolute;left:1953px;top:1400px;width:1px;height:28px;background:#222;"></div>
<div style="position:absolute;left:1851px;top:1405.1px;line-height:20px;font-size:17px;color:#e8e8e8;white-space:nowrap;">Linear</div>
<svg style="position:absolute;left:1959px;top:1410px;" width="14" height="9" viewBox="0 0 14 9"><path d="M0 0 H14 L7 7 Z" fill="#e0e0e0"/></svg>
<div style="position:absolute;left:1988px;top:1405.1px;line-height:20px;font-size:17px;color:#e0e0e0;white-space:nowrap;">Binning</div>
<div style="position:absolute;left:2053px;top:1400px;width:157px;height:28px;background:#5e5e5e;border:1px solid #1a1a1a;box-sizing:border-box;"></div>
<div style="position:absolute;left:2184px;top:1400px;width:1px;height:28px;background:#222;"></div>
<div style="position:absolute;left:2060px;top:1405.1px;line-height:20px;font-size:17px;color:#e8e8e8;white-space:nowrap;">Off</div>
<svg style="position:absolute;left:2190px;top:1410px;" width="14" height="9" viewBox="0 0 14 9"><path d="M0 0 H14 L7 7 Z" fill="#e0e0e0"/></svg>
<div style="position:absolute;left:2218px;top:1405.1px;line-height:20px;font-size:17px;color:#e0e0e0;white-space:nowrap;">Bins</div>
<div style="position:absolute;left:2261px;top:1401px;width:79px;height:26px;background:#2a2a2a;"></div>
<div style="position:absolute;left:2263px;top:1403px;width:55px;height:22px;background:#3a3a3a;"></div>
<div style="position:absolute;left:2267px;top:1405.1px;line-height:20px;font-size:17px;color:#777777;white-space:nowrap;">100</div>
<svg style="position:absolute;left:2320px;top:1402px;" width="20" height="24" viewBox="0 0 20 24"><path d="M2 7 L5 4 L8 7 M2 17 L5 20 L8 17" fill="#bbb"/><path d="M14 2 V22 M11 5 L14 2 L17 5 M11 19 L14 22 L17 19 M10 2 H18 M10 22 H18" stroke="#ddd" stroke-width="1.2" fill="none"/></svg>
<div style="position:absolute;left:2381px;top:1405.1px;line-height:20px;font-size:17px;color:#e8e8e8;white-space:nowrap;">Left</div>
<div style="position:absolute;left:2422px;top:1401px;width:77px;height:26px;background:#2a2a2a;"></div>
<div style="position:absolute;left:2424px;top:1403px;width:53px;height:22px;background:#3a3a3a;"></div>
<div style="position:absolute;left:2428px;top:1405.1px;line-height:20px;font-size:17px;color:#777777;white-space:nowrap;">n/a</div>
<svg style="position:absolute;left:2479px;top:1402px;" width="20" height="24" viewBox="0 0 20 24"><path d="M2 7 L5 4 L8 7 M2 17 L5 20 L8 17" fill="#bbb"/><path d="M14 2 V22 M11 5 L14 2 L17 5 M11 19 L14 22 L17 19 M10 2 H18 M10 22 H18" stroke="#ddd" stroke-width="1.2" fill="none"/></svg>
<div style="position:absolute;left:2508px;top:1405.1px;line-height:20px;font-size:17px;color:#e8e8e8;white-space:nowrap;">mm&sup3;</div>
<div style="position:absolute;left:2571px;top:1405.1px;line-height:20px;font-size:17px;color:#e8e8e8;white-space:nowrap;">Right</div>
<div style="position:absolute;left:2622px;top:1401px;width:77px;height:26px;background:#2a2a2a;"></div>
<div style="position:absolute;left:2624px;top:1403px;width:53px;height:22px;background:#3a3a3a;"></div>
<div style="position:absolute;left:2628px;top:1405.1px;line-height:20px;font-size:17px;color:#777777;white-space:nowrap;">n/a</div>
<svg style="position:absolute;left:2679px;top:1402px;" width="20" height="24" viewBox="0 0 20 24"><path d="M2 7 L5 4 L8 7 M2 17 L5 20 L8 17" fill="#bbb"/><path d="M14 2 V22 M11 5 L14 2 L17 5 M11 19 L14 22 L17 19 M10 2 H18 M10 22 H18" stroke="#ddd" stroke-width="1.2" fill="none"/></svg>
<div style="position:absolute;left:2708px;top:1405.1px;line-height:20px;font-size:17px;color:#e8e8e8;white-space:nowrap;">mm&sup3;</div>
<div style="position:absolute;left:2752px;top:1399px;width:80px;height:30px;background:#333333;border:2px solid #111;box-sizing:border-box;"></div>
<div style="position:absolute;left:2752.0px;top:1404.3px;width:80px;line-height:21px;font-size:18px;color:#f0f0f0;white-space:nowrap;text-align:center;">Create</div>
<div style="position:absolute;left:2842px;top:1399px;width:91px;height:30px;background:#333333;border:2px solid #111;box-sizing:border-box;"></div>
<div style="position:absolute;left:2842.0px;top:1404.3px;width:91px;line-height:21px;font-size:18px;color:#8a8a8a;white-space:nowrap;text-align:center;">Remove</div>
<div style="position:absolute;left:1488px;top:1498.1px;line-height:20px;font-size:17px;color:#e8e8e8;white-space:nowrap;">&Sigma; Voxel</div>
<div style="position:absolute;left:1631px;top:1495px;width:265px;height:25px;background:#232323;"></div>
<div style="position:absolute;right:1218px;top:1498.1px;line-height:20px;font-size:17px;color:#f4f4f4;white-space:nowrap;text-align:right;font-weight:bold;">611</div>
<div style="position:absolute;left:1488px;top:1530.1px;line-height:20px;font-size:17px;color:#e8e8e8;white-space:nowrap;">&Sigma; Volume [mm&sup3;]</div>
<div style="position:absolute;left:1631px;top:1527px;width:265px;height:25px;background:#232323;"></div>
<div style="position:absolute;right:1218px;top:1530.1px;line-height:20px;font-size:17px;color:#f4f4f4;white-space:nowrap;text-align:right;font-weight:bold;">0.059</div>
<div style="position:absolute;left:1488px;top:1561.1px;line-height:20px;font-size:17px;color:#e8e8e8;white-space:nowrap;">&Sigma; Surface [mm&sup2;]</div>
<div style="position:absolute;left:1631px;top:1558px;width:265px;height:25px;background:#232323;"></div>
<div style="position:absolute;right:1218px;top:1561.1px;line-height:20px;font-size:17px;color:#f4f4f4;white-space:nowrap;text-align:right;font-weight:bold;">3.691</div>
<div style="position:absolute;left:1966px;top:1498.1px;line-height:20px;font-size:17px;color:#e8e8e8;white-space:nowrap;">&Sigma; PX [mm&sup2;]</div>
<div style="position:absolute;left:2070px;top:1495px;width:265px;height:25px;background:#232323;"></div>
<div style="position:absolute;right:779px;top:1498.1px;line-height:20px;font-size:17px;color:#f4f4f4;white-space:nowrap;text-align:right;font-weight:bold;">0.681</div>
<div style="position:absolute;left:1966px;top:1530.1px;line-height:20px;font-size:17px;color:#e8e8e8;white-space:nowrap;">&Sigma; PY [mm&sup2;]</div>
<div style="position:absolute;left:2070px;top:1527px;width:265px;height:25px;background:#232323;"></div>
<div style="position:absolute;right:779px;top:1530.1px;line-height:20px;font-size:17px;color:#f4f4f4;white-space:nowrap;text-align:right;font-weight:bold;">0.719</div>
<div style="position:absolute;left:1966px;top:1561.1px;line-height:20px;font-size:17px;color:#e8e8e8;white-space:nowrap;">&Sigma; PZ [mm&sup2;]</div>
<div style="position:absolute;left:2070px;top:1558px;width:265px;height:25px;background:#232323;"></div>
<div style="position:absolute;right:779px;top:1561.1px;line-height:20px;font-size:17px;color:#f4f4f4;white-space:nowrap;text-align:right;font-weight:bold;">0.517</div>
<div style="position:absolute;left:2373px;top:1498.1px;line-height:20px;font-size:17px;color:#e8e8e8;white-space:nowrap;">Material volume [mm&sup3;]</div>
<div style="position:absolute;left:2577px;top:1495px;width:351px;height:25px;background:#232323;"></div>
<div style="position:absolute;right:186px;top:1498.1px;line-height:20px;font-size:17px;color:#f4f4f4;white-space:nowrap;text-align:right;font-weight:bold;">136.689</div>
<div style="position:absolute;left:2373px;top:1530.1px;line-height:20px;font-size:17px;color:#e8e8e8;white-space:nowrap;">Defect volume [mm&sup3;]</div>
<div style="position:absolute;left:2577px;top:1527px;width:351px;height:25px;background:#232323;"></div>
<div style="position:absolute;right:186px;top:1530.1px;line-height:20px;font-size:17px;color:#f4f4f4;white-space:nowrap;text-align:right;font-weight:bold;">0.059</div>
<div style="position:absolute;left:2373px;top:1561.1px;line-height:20px;font-size:17px;color:#e8e8e8;white-space:nowrap;">Defect volume ratio [%]</div>
<div style="position:absolute;left:2577px;top:1558px;width:351px;height:25px;background:#232323;"></div>
<div style="position:absolute;right:186px;top:1561.1px;line-height:20px;font-size:17px;color:#f4f4f4;white-space:nowrap;text-align:right;font-weight:bold;">0.04</div>
<div style="position:absolute;left:1469px;top:1612px;width:1492px;height:31px;background:#169a16;"></div>
<div style="position:absolute;left:2015.0px;top:1618.1px;width:400px;line-height:20px;font-size:17px;color:#101010;white-space:nowrap;text-align:center;">Result is up to date</div>
<div style="position:absolute;left:1470px;top:1653px;width:97px;height:31px;background:#333333;border:2px solid #111;box-sizing:border-box;"></div>
<div style="position:absolute;left:1470.0px;top:1658.8px;width:97px;line-height:21px;font-size:18px;color:#8a8a8a;white-space:nowrap;text-align:center;">Calculate</div>
<div style="position:absolute;left:2894px;top:1653px;width:67px;height:31px;background:#333333;border:2px solid #111;box-sizing:border-box;"></div>
<div style="position:absolute;left:2894.0px;top:1658.8px;width:67px;line-height:21px;font-size:18px;color:#f0f0f0;white-space:nowrap;text-align:center;">Close</div>
<div style="position:absolute;left:2961px;top:100px;width:113px;height:73px;background:#2a2a2a;"></div>
<div style="position:absolute;left:2961px;top:136px;width:113px;height:3px;background:#1a1a1a;"></div>
<div style="position:absolute;left:2961px;top:171px;width:113px;height:2px;background:#1c1c1c;"></div>
<div style="position:absolute;left:2961px;top:104px;width:13px;height:29px;background:#555;"></div>
<div style="position:absolute;left:2975px;top:104px;width:25px;height:29px;background:#5a5a5a;border:1px solid #222;box-sizing:border-box;"></div>
<svg style="position:absolute;left:2981px;top:115px;" width="14" height="9" viewBox="0 0 14 9"><path d="M0 0 H14 L7 7 Z" fill="#e0e0e0"/></svg>
<svg style="position:absolute;left:3002px;top:104px;" width="30" height="30" viewBox="0 0 30 30"><path d="M15 2 V10 M12 5 L15 2 L18 5" stroke="#1c1" stroke-width="1.5" fill="none"/><path d="M20 14 H28 M25 11 L28 14 L25 17" stroke="#d11" stroke-width="1.5" fill="none"/><path d="M10 18 L3 25 M3 20 V25 H8" stroke="#1ae" stroke-width="1.5" fill="none"/><path d="M9 10 Q15 6 21 10 V16 L18 19 V26 H12 V19 L9 16 Z" fill="#ccc"/></svg>
<div style="position:absolute;left:2961px;top:173px;width:113px;height:1515px;background:#2c2c2c;"></div>
<div style="position:absolute;left:2961px;top:176px;width:86px;height:2px;background:#7f9fe0;"></div>
<div style="position:absolute;left:2961px;top:181px;width:80px;height:41px;background:#141414;border:1px solid #777;box-sizing:border-box;"></div>
<svg style="position:absolute;left:2972px;top:192px;" width="65" height="20" viewBox="0 0 65 20"><rect x="6" y="12" width="9" height="3" fill="#fff"/><rect x="29.5" y="5.5" width="7" height="10" fill="none" stroke="#fff" stroke-width="2"/><path d="M48 6 L56 14 M56 6 L48 14" stroke="#fff" stroke-width="2.2"/></svg>
<div style="position:absolute;left:2961px;top:222px;width:84px;height:44px;background:#323232;"></div>
<svg style="position:absolute;left:2973px;top:244px;" width="26" height="18" viewBox="0 0 26 18"><path d="M2 2 V16 M2 5 H12 M2 12 H12" stroke="#ddd" stroke-width="3" fill="none"/><path d="M16 4 L19 1 L22 4 Z" fill="#ddd"/></svg>
<svg style="position:absolute;left:3010px;top:244px;" width="22" height="24" viewBox="0 0 22 24"><path d="M10 2 H20 L15 10 Z M2 22 H12 L7 14 Z" fill="#ddd"/><path d="M15 10 L7 14" stroke="#ddd"/></svg>
<div style="position:absolute;left:2961px;top:276px;width:79px;height:594px;background:#262626;"></div>
<div style="position:absolute;left:2961px;top:277px;width:55px;height:33px;background:#1e1e1e;border:1px solid #888;border-left:none;box-sizing:border-box;"></div>
<svg style="position:absolute;left:2990px;top:290px;" width="14" height="9" viewBox="0 0 14 9"><path d="M0 9 L7 2 L14 9 Z" fill="#e0e0e0"/></svg>
<div style="position:absolute;left:2961px;top:310px;width:55px;height:547px;background:linear-gradient(90deg,#3a3a3a,#474747 60%,#424242);"></div>
<div style="position:absolute;left:2961px;top:436.1px;line-height:20px;font-size:17px;color:#e8e8e8;white-space:nowrap;">shold)</div>
<div style="position:absolute;left:2961px;top:666.1px;line-height:20px;font-size:17px;color:#e8e8e8;white-space:nowrap;">shold)</div>
<div style="position:absolute;left:2961px;top:770px;width:55px;height:29px;background:#4c5a78;"></div>
<div style="position:absolute;left:2961px;top:857px;width:79px;height:13px;background:#2a2a2a;"></div>
<div style="position:absolute;left:3016px;top:277px;width:24px;height:580px;background:#1e1e1e;"></div>
<svg style="position:absolute;left:3021px;top:286px;" width="14" height="9" viewBox="0 0 14 9"><path d="M0 9 L7 2 L14 9 Z" fill="#e0e0e0"/></svg>
<div style="position:absolute;left:3021px;top:614px;width:14px;height:223px;background:#7f9fe0;"></div>
<svg style="position:absolute;left:3021px;top:845px;" width="14" height="9" viewBox="0 0 14 9"><path d="M0 0 H14 L7 7 Z" fill="#e0e0e0"/></svg>
<div style="position:absolute;left:3048px;top:176px;width:25px;height:1465px;background:#212121;"></div>
<svg style="position:absolute;left:3053px;top:180px;" width="14" height="9" viewBox="0 0 14 9"><path d="M0 9 L7 2 L14 9 Z" fill="#e0e0e0"/></svg>
<div style="position:absolute;left:3051px;top:195px;width:15px;height:429px;background:#7f9fe0;"></div>
<div style="position:absolute;left:2961px;top:870px;width:84px;height:3px;background:#7f9fe0;"></div>
<div style="position:absolute;left:2961px;top:878px;width:80px;height:40px;background:#141414;border:1px solid #777;box-sizing:border-box;"></div>
<svg style="position:absolute;left:2972px;top:888px;" width="65" height="20" viewBox="0 0 65 20"><rect x="6" y="12" width="9" height="3" fill="#fff"/><rect x="29.5" y="5.5" width="7" height="10" fill="none" stroke="#fff" stroke-width="2"/><path d="M48 6 L56 14 M56 6 L48 14" stroke="#fff" stroke-width="2.2"/></svg>
<div style="position:absolute;left:2961px;top:918px;width:84px;height:723px;background:#303030;"></div>
<div style="position:absolute;left:2961px;top:924px;width:12px;height:34px;background:#2a2a2a;border:1px solid #111;box-sizing:border-box;"></div>
<svg style="position:absolute;left:2981px;top:930px;" width="24" height="24" viewBox="0 0 24 24"><rect x="1" y="1" width="22" height="22" fill="#4a4a4a" stroke="#666"/><rect x="6" y="2" width="12" height="7" fill="#666"/><rect x="7" y="14" width="10" height="9" fill="#555"/></svg>
<svg style="position:absolute;left:3017px;top:938px;" width="14" height="9" viewBox="0 0 14 9"><path d="M0 0 H14 L7 7 Z" fill="#e0e0e0"/></svg>
<div style="position:absolute;left:2961px;top:1007px;width:72px;height:527px;background:#2e2e2e;border:2px solid #222;border-left:none;box-sizing:border-box;"></div>
<div style="position:absolute;left:2961px;top:1538px;width:70px;height:52px;background:#2a2a2a;border:1px solid #1a1a1a;border-left:none;box-sizing:border-box;"></div>
<div style="position:absolute;left:2961px;top:1545px;width:6px;height:41px;background:#1a1a1a;"></div>
<div style="position:absolute;left:2970px;top:1545px;width:58px;height:41px;background:#141414;border:2px solid #111;box-sizing:border-box;"></div>
<div style="position:absolute;left:2978px;top:1552px;width:43px;height:26px;background:#d8d4cc;"></div>
<svg style="position:absolute;left:2978px;top:1552px;" width="43" height="26" viewBox="0 0 43 26"><path d="M0 26 L43 10 V26 Z" fill="#bdb8b0"/><path d="M4 9 H16 M12 4 L17 9 L12 14 M39 9 H27 M31 4 L26 9 L31 14 M21 1 V25" stroke="#888" stroke-width="2" fill="none"/></svg>
<div style="position:absolute;left:2961px;top:1596px;width:69px;height:36px;background:#2a2a2a;border:1px solid #1a1a1a;border-left:none;box-sizing:border-box;"></div>
<div style="position:absolute;left:2961px;top:1601px;width:65px;height:27px;background:#2e2e2e;border:1px solid #111;border-left:none;box-sizing:border-box;"></div>
<div style="position:absolute;left:2999px;top:1601px;width:2px;height:27px;background:#111;"></div>
<svg style="position:absolute;left:3006px;top:1611px;" width="14" height="9" viewBox="0 0 14 9"><path d="M0 0 H14 L7 7 Z" fill="#8a8a8a"/></svg>
<div style="position:absolute;left:2961px;top:1634px;width:79px;height:6px;background:#222;"></div>
<div style="position:absolute;left:3045px;top:176px;width:2px;height:1465px;background:#7f9fe0;"></div>
<svg style="position:absolute;left:3051px;top:1628px;" width="14" height="9" viewBox="0 0 14 9"><path d="M0 0 H14 L7 7 Z" fill="#e0e0e0"/></svg>
<div style="position:absolute;left:2961px;top:1650px;width:111px;height:35px;background:#2e2e2e;border:1px solid #151515;box-sizing:border-box;"></div></body></html>
